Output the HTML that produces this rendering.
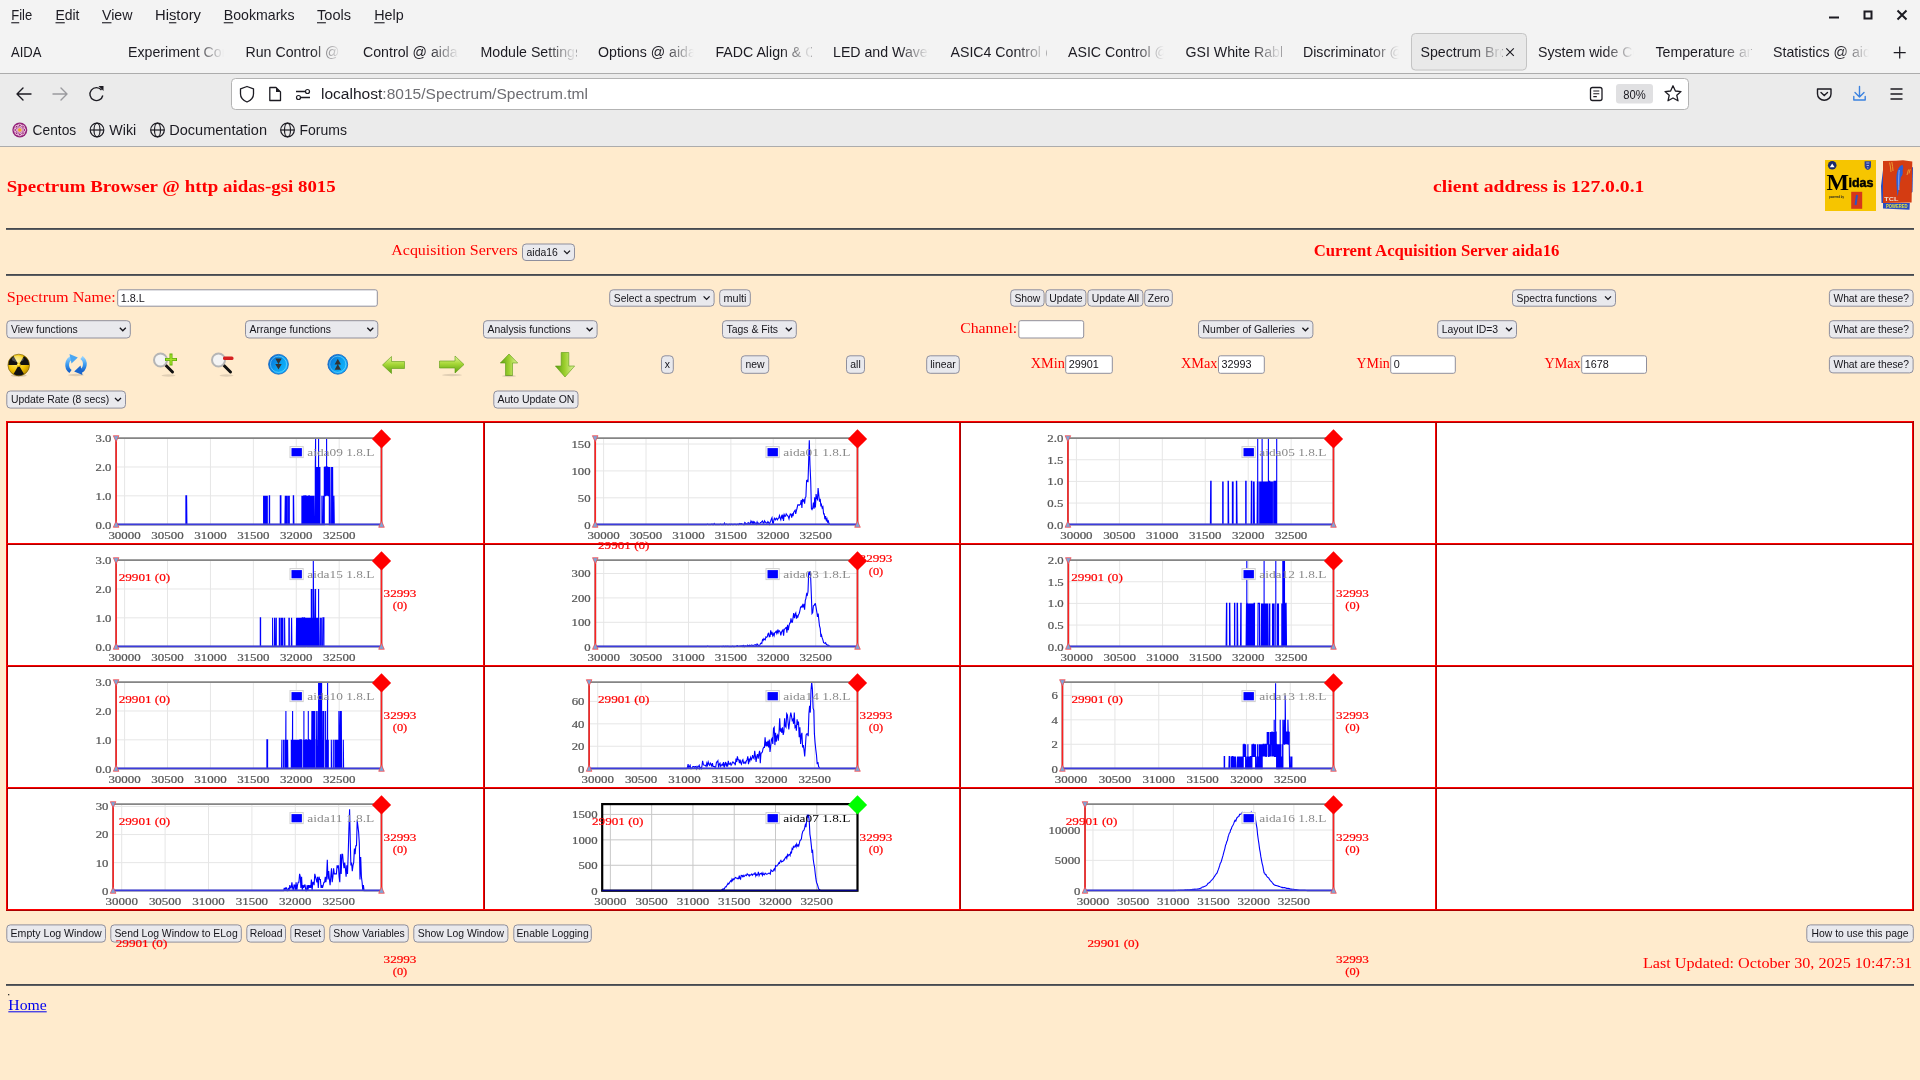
<!DOCTYPE html>
<html><head><meta charset="utf-8"><title>Spectrum Browser</title>
<style>html,body{margin:0;padding:0;width:1920px;height:1080px;overflow:hidden;background:#ffebcd;}svg{display:block;font-family:"Liberation Sans", sans-serif;will-change:transform;}</style></head><body>
<svg width="1920" height="1080" viewBox="0 0 1920 1080">
<rect x="0" y="0" width="1920" height="74" fill="#f3f3f3"/>
<rect x="0" y="73" width="1920" height="1" fill="#acacac"/>
<rect x="0" y="74" width="1920" height="72" fill="#ebebeb"/>
<rect x="0" y="146" width="1920" height="1" fill="#acacac"/>
<text x="11.25" y="20.30" font-size="14.6" fill="#1c1b22" textLength="21.00" lengthAdjust="spacingAndGlyphs" >File</text>
<rect x="11.25" y="22.2" width="7.96" height="1.1" fill="#1c1b22"/>
<text x="55.50" y="20.30" font-size="14.6" fill="#1c1b22" textLength="24.00" lengthAdjust="spacingAndGlyphs" >Edit</text>
<rect x="55.50" y="22.2" width="9.29" height="1.1" fill="#1c1b22"/>
<text x="102.00" y="20.30" font-size="14.6" fill="#1c1b22" textLength="30.50" lengthAdjust="spacingAndGlyphs" >View</text>
<rect x="102.00" y="22.2" width="9.47" height="1.1" fill="#1c1b22"/>
<text x="155.00" y="20.30" font-size="14.6" fill="#1c1b22" textLength="46.00" lengthAdjust="spacingAndGlyphs" >History</text>
<rect x="168.96" y="22.2" width="7.39" height="1.1" fill="#1c1b22"/>
<text x="223.75" y="20.30" font-size="14.6" fill="#1c1b22" textLength="70.75" lengthAdjust="spacingAndGlyphs" >Bookmarks</text>
<rect x="223.75" y="22.2" width="9.44" height="1.1" fill="#1c1b22"/>
<text x="317.00" y="20.30" font-size="14.6" fill="#1c1b22" textLength="34.00" lengthAdjust="spacingAndGlyphs" >Tools</text>
<rect x="317.00" y="22.2" width="8.90" height="1.1" fill="#1c1b22"/>
<text x="374.25" y="20.30" font-size="14.6" fill="#1c1b22" textLength="29.50" lengthAdjust="spacingAndGlyphs" >Help</text>
<rect x="374.25" y="22.2" width="10.36" height="1.1" fill="#1c1b22"/>
<rect x="1829" y="16.5" width="10" height="2" fill="#1c1b22"/>
<rect x="1864.5" y="11.5" width="7" height="7" fill="none" stroke="#1c1b22" stroke-width="2"/>
<path d="M1897.5 10.5 L1906.5 19.5 M1906.5 10.5 L1897.5 19.5" stroke="#1c1b22" stroke-width="2"/>
<text x="11.00" y="57.30" font-size="15" fill="#1c1b22" textLength="30.50" lengthAdjust="spacingAndGlyphs" >AIDA</text>
<defs><linearGradient id="fade" x1="0" x2="1" y1="0" y2="0"><stop offset="0" stop-color="#f3f3f3" stop-opacity="0"/><stop offset="1" stop-color="#f3f3f3" stop-opacity="1"/></linearGradient><linearGradient id="fadeSel" x1="0" x2="1" y1="0" y2="0"><stop offset="0" stop-color="#e9e9e9" stop-opacity="0"/><stop offset="1" stop-color="#e9e9e9" stop-opacity="1"/></linearGradient><clipPath id="tabclip"><rect x="0" y="0" width="96" height="74"/></clipPath><clipPath id="tabclipSel"><rect x="0" y="0" width="82" height="74"/></clipPath></defs>
<g transform="translate(128.00,0)" clip-path="url(#tabclip)">
<g transform="scale(0.945,1)">
<text x="0.00" y="57.30" font-size="15" fill="#1c1b22" >Experiment Control @ aida</text>
</g>
<rect x="66" y="40" width="30" height="26" fill="url(#fade)"/>
</g>
<g transform="translate(245.50,0)" clip-path="url(#tabclip)">
<g transform="scale(0.945,1)">
<text x="0.00" y="57.30" font-size="15" fill="#1c1b22" >Run Control @ aida</text>
</g>
<rect x="66" y="40" width="30" height="26" fill="url(#fade)"/>
</g>
<g transform="translate(363.00,0)" clip-path="url(#tabclip)">
<g transform="scale(0.945,1)">
<text x="0.00" y="57.30" font-size="15" fill="#1c1b22" >Control @ aida16</text>
</g>
<rect x="66" y="40" width="30" height="26" fill="url(#fade)"/>
</g>
<g transform="translate(480.50,0)" clip-path="url(#tabclip)">
<g transform="scale(0.945,1)">
<text x="0.00" y="57.30" font-size="15" fill="#1c1b22" >Module Settings @ aida</text>
</g>
<rect x="66" y="40" width="30" height="26" fill="url(#fade)"/>
</g>
<g transform="translate(598.00,0)" clip-path="url(#tabclip)">
<g transform="scale(0.945,1)">
<text x="0.00" y="57.30" font-size="15" fill="#1c1b22" >Options @ aida16</text>
</g>
<rect x="66" y="40" width="30" height="26" fill="url(#fade)"/>
</g>
<g transform="translate(715.50,0)" clip-path="url(#tabclip)">
<g transform="scale(0.945,1)">
<text x="0.00" y="57.30" font-size="15" fill="#1c1b22" >FADC Align &amp; Control</text>
</g>
<rect x="66" y="40" width="30" height="26" fill="url(#fade)"/>
</g>
<g transform="translate(833.00,0)" clip-path="url(#tabclip)">
<g transform="scale(0.945,1)">
<text x="0.00" y="57.30" font-size="15" fill="#1c1b22" >LED and Waveform</text>
</g>
<rect x="66" y="40" width="30" height="26" fill="url(#fade)"/>
</g>
<g transform="translate(950.50,0)" clip-path="url(#tabclip)">
<g transform="scale(0.945,1)">
<text x="0.00" y="57.30" font-size="15" fill="#1c1b22" >ASIC4 Control @ aida</text>
</g>
<rect x="66" y="40" width="30" height="26" fill="url(#fade)"/>
</g>
<g transform="translate(1068.00,0)" clip-path="url(#tabclip)">
<g transform="scale(0.945,1)">
<text x="0.00" y="57.30" font-size="15" fill="#1c1b22" >ASIC Control @ aida</text>
</g>
<rect x="66" y="40" width="30" height="26" fill="url(#fade)"/>
</g>
<g transform="translate(1185.50,0)" clip-path="url(#tabclip)">
<g transform="scale(0.945,1)">
<text x="0.00" y="57.30" font-size="15" fill="#1c1b22" >GSI White Rabbit</text>
</g>
<rect x="66" y="40" width="30" height="26" fill="url(#fade)"/>
</g>
<g transform="translate(1303.00,0)" clip-path="url(#tabclip)">
<g transform="scale(0.945,1)">
<text x="0.00" y="57.30" font-size="15" fill="#1c1b22" >Discriminator @ aida</text>
</g>
<rect x="66" y="40" width="30" height="26" fill="url(#fade)"/>
</g>
<rect x="1411" y="34" width="115" height="36.5" rx="4" fill="#000" opacity="0.06"/>
<rect x="1411.5" y="33.5" width="115" height="36.5" rx="4" fill="#e9e9e9" stroke="#c4c4c4" stroke-width="1"/>
<g transform="translate(1420.50,0)" clip-path="url(#tabclipSel)">
<g transform="scale(0.945,1)">
<text x="0.00" y="57.30" font-size="15" fill="#1c1b22" >Spectrum Browser</text>
</g>
<rect x="52" y="40" width="30" height="26" fill="url(#fadeSel)"/>
</g>
<path d="M1506.3 48.3 L1513.8 55.8 M1513.8 48.3 L1506.3 55.8" stroke="#1c1b22" stroke-width="1.15"/>
<g transform="translate(1538.00,0)" clip-path="url(#tabclip)">
<g transform="scale(0.945,1)">
<text x="0.00" y="57.30" font-size="15" fill="#1c1b22" >System wide Control</text>
</g>
<rect x="66" y="40" width="30" height="26" fill="url(#fade)"/>
</g>
<g transform="translate(1655.50,0)" clip-path="url(#tabclip)">
<g transform="scale(0.945,1)">
<text x="0.00" y="57.30" font-size="15" fill="#1c1b22" >Temperature and</text>
</g>
<rect x="66" y="40" width="30" height="26" fill="url(#fade)"/>
</g>
<g transform="translate(1773.00,0)" clip-path="url(#tabclip)">
<g transform="scale(0.945,1)">
<text x="0.00" y="57.30" font-size="15" fill="#1c1b22" >Statistics @ aida16</text>
</g>
<rect x="66" y="40" width="30" height="26" fill="url(#fade)"/>
</g>
<path d="M1899.7 46.5 V58.5 M1893.7 52.5 H1905.7" stroke="#1c1b22" stroke-width="1.25"/>
<path d="M17 94 H31 M17 94 L23 88 M17 94 L23 100" stroke="#1c1b22" stroke-width="1.4" fill="none" stroke-linecap="round"/>
<path d="M67 94 H53 M67 94 L61 88 M67 94 L61 100" stroke="#9a9a9e" stroke-width="1.4" fill="none" stroke-linecap="round"/>
<path d="M101.5 90 A6.5 6.5 0 1 0 102.8 95.5" stroke="#1c1b22" stroke-width="1.4" fill="none"/>
<path d="M98.5 86 L103.5 86 L103.5 91 Z" fill="#1c1b22"/>
<rect x="231.5" y="78.5" width="1457" height="31" rx="4" fill="#ffffff" stroke="#b3b3b3"/>
<path d="M247 86.5 L253.5 88.8 V94 C253.5 98 250.5 100.5 247 102 C243.5 100.5 240.5 98 240.5 94 V88.8 Z" fill="none" stroke="#1c1b22" stroke-width="1.3" stroke-linejoin="round"/>
<path d="M269.8 87.5 H276 L280.5 92 V100.5 H269.8 Z" fill="none" stroke="#1c1b22" stroke-width="1.3" stroke-linejoin="round"/>
<path d="M276 87.5 V92 H280.5 Z" fill="#1c1b22"/>
<path d="M296 91.5 H305 M301 97.5 H310" stroke="#1c1b22" stroke-width="1.3"/>
<circle cx="307.5" cy="91.5" r="2" fill="none" stroke="#1c1b22" stroke-width="1.2"/>
<circle cx="298.5" cy="97.5" r="2" fill="none" stroke="#1c1b22" stroke-width="1.2"/>
<text x="321.00" y="99.30" font-size="15.4" fill="#1c1b22" textLength="61.36" lengthAdjust="spacingAndGlyphs" >localhost</text>
<text x="382.36" y="99.30" font-size="15.4" fill="#6d6d72" textLength="205.64" lengthAdjust="spacingAndGlyphs" >:8015/Spectrum/Spectrum.tml</text>
<rect x="1590.5" y="87.5" width="11.5" height="13" rx="2" fill="none" stroke="#1c1b22" stroke-width="1.3"/>
<path d="M1593.3 91 H1599.3 M1593.3 93.8 H1599.3 M1593.3 96.6 H1596.8" stroke="#1c1b22" stroke-width="1.1"/>
<rect x="1616" y="84" width="37" height="19.5" rx="3" fill="#e0e0e2"/>
<text x="1634.50" y="98.70" font-size="12.5" fill="#1c1b22" text-anchor="middle" textLength="22.50" lengthAdjust="spacingAndGlyphs" >80%</text>
<path d="M1673 85.8 L1675.4 91 L1681 91.6 L1676.8 95.3 L1678 100.8 L1673 98 L1668 100.8 L1669.2 95.3 L1665 91.6 L1670.6 91 Z" fill="none" stroke="#1c1b22" stroke-width="1.3" stroke-linejoin="round"/>
<path d="M1817.5 89 H1831 V94 A6.75 6.2 0 0 1 1817.5 94 Z" fill="none" stroke="#1c1b22" stroke-width="1.4" stroke-linejoin="round"/>
<path d="M1821 92.5 L1824.25 95.5 L1827.5 92.5" fill="none" stroke="#1c1b22" stroke-width="1.4" stroke-linecap="round"/>
<path d="M1859.5 86.5 V97 M1855 92.5 L1859.5 97 L1864 92.5 M1853.8 96.5 V100 H1865.2 V96.5" fill="none" stroke="#3b82e0" stroke-width="1.4" stroke-linecap="round" stroke-linejoin="round"/>
<path d="M1890.5 89 H1902.5 M1890.5 94 H1902.5 M1890.5 99 H1902.5" stroke="#1c1b22" stroke-width="1.4"/>
<circle cx="19.8" cy="130" r="7.5" fill="#932279"/>
<circle cx="23.40" cy="130.00" r="2.2" fill="none" stroke="#f0c8e0" stroke-width="0.9"/>
<circle cx="22.35" cy="132.55" r="2.2" fill="none" stroke="#f0c8e0" stroke-width="0.9"/>
<circle cx="19.80" cy="133.60" r="2.2" fill="none" stroke="#f0c8e0" stroke-width="0.9"/>
<circle cx="17.25" cy="132.55" r="2.2" fill="none" stroke="#f0c8e0" stroke-width="0.9"/>
<circle cx="16.20" cy="130.00" r="2.2" fill="none" stroke="#f0c8e0" stroke-width="0.9"/>
<circle cx="17.25" cy="127.45" r="2.2" fill="none" stroke="#f0c8e0" stroke-width="0.9"/>
<circle cx="19.80" cy="126.40" r="2.2" fill="none" stroke="#f0c8e0" stroke-width="0.9"/>
<circle cx="22.35" cy="127.45" r="2.2" fill="none" stroke="#f0c8e0" stroke-width="0.9"/>
<circle cx="19.8" cy="130" r="1.8" fill="#efa724"/>
<text x="32.50" y="135.20" font-size="14.8" fill="#1c1b22" textLength="43.75" lengthAdjust="spacingAndGlyphs" >Centos</text>
<g fill="none" stroke="#1c1b22" stroke-width="1.2"><circle cx="97" cy="130" r="6.8"/><ellipse cx="97" cy="130" rx="3" ry="6.8"/><path d="M90.2 130 H103.8"/></g>
<g fill="none" stroke="#1c1b22" stroke-width="1.2"><circle cx="157.5" cy="130" r="6.8"/><ellipse cx="157.5" cy="130" rx="3" ry="6.8"/><path d="M150.7 130 H164.3"/></g>
<g fill="none" stroke="#1c1b22" stroke-width="1.2"><circle cx="287.5" cy="130" r="6.8"/><ellipse cx="287.5" cy="130" rx="3" ry="6.8"/><path d="M280.7 130 H294.3"/></g>
<text x="109.25" y="135.20" font-size="14.8" fill="#1c1b22" textLength="27.00" lengthAdjust="spacingAndGlyphs" >Wiki</text>
<text x="169.25" y="135.20" font-size="14.8" fill="#1c1b22" textLength="97.75" lengthAdjust="spacingAndGlyphs" >Documentation</text>
<text x="299.50" y="135.20" font-size="14.8" fill="#1c1b22" textLength="47.50" lengthAdjust="spacingAndGlyphs" >Forums</text>
<rect x="0" y="147" width="1920" height="933" fill="#ffebcd"/>
<text x="6.75" y="192.30" font-size="17.6" fill="#ff0000" font-family='"Liberation Serif", serif' font-weight="bold" textLength="329.00" lengthAdjust="spacingAndGlyphs" >Spectrum Browser @ http aidas-gsi 8015</text>
<text x="1433.10" y="192.30" font-size="17.6" fill="#ff0000" font-family='"Liberation Serif", serif' font-weight="bold" textLength="211.30" lengthAdjust="spacingAndGlyphs" >client address is 127.0.0.1</text>
<rect x="1825" y="160" width="51" height="51" fill="#f6c500"/>
<circle cx="1832.2" cy="165.3" r="4.3" fill="#1b2a6b"/><path d="M1829.8 167.2 L1832.2 163.5 L1834.6 167.2 Z" fill="#fff"/>
<path d="M1864.6 161.3 H1871 V166 C1871 168 1869.5 169.5 1867.8 170 C1866.1 169.5 1864.6 168 1864.6 166 Z" fill="#2a3f9a"/><path d="M1866.2 163 H1869.4 M1866.6 165.5 H1869 M1867.8 167.2 V168.6" stroke="#dfe4ff" stroke-width="0.7"/>
<text x="1826.5" y="189.5" font-size="24" font-weight="bold" fill="#000" font-family='"Liberation Serif", serif' textLength="22.5" lengthAdjust="spacingAndGlyphs">M</text>
<text x="1848.5" y="187" font-size="13.5" font-weight="bold" fill="#000" stroke="#000" stroke-width="0.5" textLength="25" lengthAdjust="spacingAndGlyphs">idas</text>
<text x="1829" y="197.5" font-size="3.6" font-weight="bold" fill="#222" textLength="15" lengthAdjust="spacingAndGlyphs">powered by</text>
<rect x="1851.2" y="191.8" width="11" height="17" fill="#d5371a"/><path d="M1857 195 L1855.5 205" stroke="#2b55c0" stroke-width="2"/>
<path d="M1881 186 L1883 170 L1883 208.5 L1909.5 209.8 L1909.8 203 L1881.5 203 Z" fill="#2a4cc0"/>
<path d="M1911 168 L1913 167 L1912.5 192 L1911 193 Z" fill="#2a4cc0"/>
<path d="M1883 161 L1896 160.8 L1903 160.3 L1912.3 161.6 L1911.6 202.6 L1883 202.9 Z" fill="#d43c12"/>
<path d="M1902.3 164.8 C1898.5 166 1896.2 172 1896.3 180 C1896.4 186 1897 191 1897.6 196.5 C1898.6 190 1900.3 183 1900.8 177 C1902.5 176 1903.2 173 1902.6 170.5 C1903.6 168.5 1903.5 166.3 1902.3 164.8 Z" fill="#2d5fd8"/>
<path d="M1899.2 170 C1898.6 176 1898.6 184 1898.9 190" stroke="#b8d0ff" stroke-width="0.7" fill="none"/>
<path d="M1889.6 162.5 C1890.3 165.5 1890.8 168.5 1891 172 M1891.8 162 C1892.4 165 1892.9 168 1893 171 M1908.5 169.5 L1907 175 M1910.2 169.2 L1909 173.5" stroke="#f2b33a" stroke-width="0.8" fill="none"/>
<text x="1884.3" y="201.2" font-size="6" font-weight="bold" fill="#f1dccf" textLength="14" lengthAdjust="spacingAndGlyphs">TCL</text>
<text x="1886" y="208.4" font-size="5.2" font-weight="bold" fill="#e6e23a" textLength="21.5" lengthAdjust="spacingAndGlyphs">POWERED</text>
<rect x="6" y="228" width="1908" height="1" fill="#46494e"/>
<rect x="6" y="229" width="1908" height="1" fill="#5c5f63"/>
<text x="391.25" y="255.20" font-size="15.4" fill="#ff0000" font-family='"Liberation Serif", serif' textLength="126.50" lengthAdjust="spacingAndGlyphs" >Acquisition Servers</text>
<rect x="522.50" y="244.00" width="52.00" height="16.50" rx="3.5" fill="#e9e9ed" stroke="#8f8f9d"/>
<text x="526.60" y="256.15" font-size="11" fill="#15141a" textLength="31.21" lengthAdjust="spacingAndGlyphs" >aida16</text>
<path d="M564.00 250.65 L567.00 253.65 L570.00 250.65" fill="none" stroke="#15141a" stroke-width="1.3"/>
<text x="1313.70" y="256.00" font-size="16.2" fill="#ff0000" font-family='"Liberation Serif", serif' font-weight="bold" textLength="245.70" lengthAdjust="spacingAndGlyphs" >Current Acquisition Server aida16</text>
<rect x="6" y="274" width="1908" height="1" fill="#46494e"/>
<rect x="6" y="275" width="1908" height="1" fill="#5c5f63"/>
<text x="6.75" y="302.00" font-size="15.4" fill="#ff0000" font-family='"Liberation Serif", serif' textLength="109.00" lengthAdjust="spacingAndGlyphs" >Spectrum Name:</text>
<rect x="117.70" y="289.80" width="259.60" height="16.40" rx="2" fill="#ffffff" stroke="#8f8f9d"/>
<text x="120.70" y="301.90" font-size="10.8" fill="#15141a" >1.8.L</text>
<rect x="609.70" y="289.80" width="104.40" height="16.40" rx="3.5" fill="#e9e9ed" stroke="#8f8f9d"/>
<text x="613.80" y="301.90" font-size="11" fill="#15141a" textLength="82.50" lengthAdjust="spacingAndGlyphs" >Select a spectrum</text>
<path d="M703.60 296.40 L706.60 299.40 L709.60 296.40" fill="none" stroke="#15141a" stroke-width="1.3"/>
<rect x="719.70" y="289.80" width="30.60" height="16.40" rx="3.5" fill="#e9e9ed" stroke="#8f8f9d"/>
<text x="735.00" y="301.90" font-size="11" fill="#15141a" text-anchor="middle" textLength="23.00" lengthAdjust="spacingAndGlyphs" >multi</text>
<rect x="1010.70" y="289.80" width="33.40" height="16.40" rx="3.5" fill="#e9e9ed" stroke="#8f8f9d"/>
<text x="1027.40" y="301.90" font-size="11" fill="#15141a" text-anchor="middle" textLength="26.00" lengthAdjust="spacingAndGlyphs" >Show</text>
<rect x="1045.90" y="289.80" width="40.00" height="16.40" rx="3.5" fill="#e9e9ed" stroke="#8f8f9d"/>
<text x="1065.90" y="301.90" font-size="11" fill="#15141a" text-anchor="middle" textLength="33.52" lengthAdjust="spacingAndGlyphs" >Update</text>
<rect x="1087.90" y="289.80" width="55.00" height="16.40" rx="3.5" fill="#e9e9ed" stroke="#8f8f9d"/>
<text x="1115.40" y="301.90" font-size="11" fill="#15141a" text-anchor="middle" textLength="47.38" lengthAdjust="spacingAndGlyphs" >Update All</text>
<rect x="1144.70" y="289.80" width="27.60" height="16.40" rx="3.5" fill="#e9e9ed" stroke="#8f8f9d"/>
<text x="1158.50" y="301.90" font-size="11" fill="#15141a" text-anchor="middle" textLength="21.37" lengthAdjust="spacingAndGlyphs" >Zero</text>
<rect x="1512.50" y="289.80" width="103.00" height="16.40" rx="3.5" fill="#e9e9ed" stroke="#8f8f9d"/>
<text x="1516.60" y="301.90" font-size="11" fill="#15141a" textLength="80.31" lengthAdjust="spacingAndGlyphs" >Spectra functions</text>
<path d="M1605.00 296.40 L1608.00 299.40 L1611.00 296.40" fill="none" stroke="#15141a" stroke-width="1.3"/>
<rect x="1829.40" y="289.80" width="83.70" height="16.40" rx="3.5" fill="#e9e9ed" stroke="#8f8f9d"/>
<text x="1871.25" y="301.90" font-size="11" fill="#15141a" text-anchor="middle" textLength="75.70" lengthAdjust="spacingAndGlyphs" >What are these?</text>
<rect x="6.80" y="320.70" width="123.50" height="17.30" rx="3.5" fill="#e9e9ed" stroke="#8f8f9d"/>
<text x="10.90" y="333.25" font-size="11" fill="#15141a" textLength="66.83" lengthAdjust="spacingAndGlyphs" >View functions</text>
<path d="M119.80 327.75 L122.80 330.75 L125.80 327.75" fill="none" stroke="#15141a" stroke-width="1.3"/>
<rect x="245.50" y="320.70" width="132.30" height="17.30" rx="3.5" fill="#e9e9ed" stroke="#8f8f9d"/>
<text x="249.60" y="333.25" font-size="11" fill="#15141a" textLength="81.47" lengthAdjust="spacingAndGlyphs" >Arrange functions</text>
<path d="M367.30 327.75 L370.30 330.75 L373.30 327.75" fill="none" stroke="#15141a" stroke-width="1.3"/>
<rect x="483.50" y="320.70" width="113.60" height="17.30" rx="3.5" fill="#e9e9ed" stroke="#8f8f9d"/>
<text x="487.60" y="333.25" font-size="11" fill="#15141a" textLength="83.20" lengthAdjust="spacingAndGlyphs" >Analysis functions</text>
<path d="M586.60 327.75 L589.60 330.75 L592.60 327.75" fill="none" stroke="#15141a" stroke-width="1.3"/>
<rect x="722.50" y="320.70" width="73.80" height="17.30" rx="3.5" fill="#e9e9ed" stroke="#8f8f9d"/>
<text x="726.60" y="333.25" font-size="11" fill="#15141a" textLength="51.41" lengthAdjust="spacingAndGlyphs" >Tags &amp; Fits</text>
<path d="M785.80 327.75 L788.80 330.75 L791.80 327.75" fill="none" stroke="#15141a" stroke-width="1.3"/>
<text x="960.20" y="333.20" font-size="15.4" fill="#ff0000" font-family='"Liberation Serif", serif' textLength="57.00" lengthAdjust="spacingAndGlyphs" >Channel:</text>
<rect x="1018.80" y="320.70" width="64.90" height="17.30" rx="2" fill="#ffffff" stroke="#8f8f9d"/>
<rect x="1198.50" y="320.70" width="114.40" height="17.30" rx="3.5" fill="#e9e9ed" stroke="#8f8f9d"/>
<text x="1202.60" y="333.25" font-size="11" fill="#15141a" textLength="92.43" lengthAdjust="spacingAndGlyphs" >Number of Galleries</text>
<path d="M1302.40 327.75 L1305.40 330.75 L1308.40 327.75" fill="none" stroke="#15141a" stroke-width="1.3"/>
<rect x="1437.70" y="320.70" width="78.80" height="17.30" rx="3.5" fill="#e9e9ed" stroke="#8f8f9d"/>
<text x="1441.80" y="333.25" font-size="11" fill="#15141a" textLength="56.34" lengthAdjust="spacingAndGlyphs" >Layout ID=3</text>
<path d="M1506.00 327.75 L1509.00 330.75 L1512.00 327.75" fill="none" stroke="#15141a" stroke-width="1.3"/>
<rect x="1829.40" y="320.70" width="83.70" height="17.30" rx="3.5" fill="#e9e9ed" stroke="#8f8f9d"/>
<text x="1871.25" y="333.25" font-size="11" fill="#15141a" text-anchor="middle" textLength="75.70" lengthAdjust="spacingAndGlyphs" >What are these?</text>
<defs><radialGradient id="radg" cx="0.4" cy="0.35" r="0.7"><stop offset="0" stop-color="#fff38a"/><stop offset="0.6" stop-color="#f2c200"/><stop offset="1" stop-color="#b88a00"/></radialGradient><linearGradient id="blug" x1="0" x2="1" y1="0.2" y2="0.8"><stop offset="0" stop-color="#0b6fd4"/><stop offset="0.55" stop-color="#08a0f0"/><stop offset="1" stop-color="#12b8ff"/></linearGradient><linearGradient id="grng" x1="0" x2="0" y1="0" y2="1"><stop offset="0" stop-color="#e4f5a0"/><stop offset="0.45" stop-color="#a8d838"/><stop offset="1" stop-color="#5aa010"/></linearGradient><linearGradient id="grnh" x1="0" x2="1" y1="0" y2="0"><stop offset="0" stop-color="#5aa010"/><stop offset="0.5" stop-color="#9ed030"/><stop offset="1" stop-color="#e0f4a0"/></linearGradient></defs>
<ellipse cx="18.75" cy="375.5" rx="8" ry="1.5" fill="#000" opacity="0.15"/>
<circle cx="18.75" cy="365" r="10.8" fill="url(#radg)" stroke="#6b5300" stroke-width="0.6"/>
<path d="M18.75 365 L8.35 365.00 A10.4 10.4 0 0 1 13.55 355.99 Z" fill="#111"/>
<path d="M18.75 365 L23.95 355.99 A10.4 10.4 0 0 1 29.15 365.00 Z" fill="#111"/>
<path d="M18.75 365 L23.95 374.01 A10.4 10.4 0 0 1 13.55 374.01 Z" fill="#111"/>
<circle cx="18.75" cy="365" r="2" fill="url(#radg)"/>
<ellipse cx="17.75" cy="359" rx="6" ry="3" fill="#fff" opacity="0.25"/>
<defs><linearGradient id="refg" x1="0" x2="0" y1="0" y2="1"><stop offset="0" stop-color="#8fd0ff"/><stop offset="0.5" stop-color="#3a9af0"/><stop offset="1" stop-color="#1560c8"/></linearGradient></defs>
<path d="M70.5 371.5 A8.2 8.2 0 0 1 72.5 357.2" fill="none" stroke="url(#refg)" stroke-width="3.8"/>
<path d="M69.5 354 L77.8 357.5 L71.5 363.5 Z" fill="#4aa6f2"/>
<path d="M81.5 357.5 A8.2 8.2 0 0 1 79.5 371.8" fill="none" stroke="url(#refg)" stroke-width="3.8"/>
<path d="M82.5 375 L74.2 371.5 L80.5 365.5 Z" fill="#1a66cc"/>
<ellipse cx="76" cy="375" rx="8" ry="1.2" fill="#000" opacity="0.12"/>
<path d="M166.0 365.5 L172.5 372" stroke="#111" stroke-width="3" stroke-linecap="round"/>
<circle cx="160.5" cy="360" r="6.5" fill="#f4f4f4" stroke="#b5b5b5" stroke-width="2"/>
<ellipse cx="168.5" cy="375.5" rx="7" ry="1.2" fill="#000" opacity="0.12"/>
<path d="M171 353.5 V365.5 M165 359.5 H177" stroke="#5fae0a" stroke-width="3"/>
<path d="M171 354.5 V364.5 M166 359.5 H176" stroke="#a6e22a" stroke-width="1.4"/>
<path d="M224.0 365.5 L230.5 372" stroke="#111" stroke-width="3" stroke-linecap="round"/>
<circle cx="218.5" cy="360" r="6.5" fill="#f4f4f4" stroke="#b5b5b5" stroke-width="2"/>
<ellipse cx="226.5" cy="375.5" rx="7" ry="1.2" fill="#000" opacity="0.12"/>
<rect x="223" y="356.5" width="10.5" height="3.5" rx="1.5" fill="#d62020"/>
<circle cx="278.5" cy="364.3" r="9.9" fill="url(#blug)" stroke="#0a5cc0" stroke-width="0.8"/>
<circle cx="278.5" cy="364.3" r="8.1" fill="none" stroke="#a8e4ff" stroke-width="0.7" opacity="0.7"/>
<path d="M275.3 358.6 L278.5 364.3 L281.7 358.6 Z M275.3 363.9 L278.5 369.6 L281.7 363.9 Z" fill="#333"/>
<circle cx="337.8" cy="364.3" r="9.9" fill="url(#blug)" stroke="#0a5cc0" stroke-width="0.8"/>
<circle cx="337.8" cy="364.3" r="8.1" fill="none" stroke="#a8e4ff" stroke-width="0.7" opacity="0.7"/>
<path d="M334.6 364.5 L337.8 358.8 L341.0 364.5 Z M334.6 369.8 L337.8 364 L341.0 369.8 Z" fill="#333"/>
<path d="M382.5 365 L391.5 356.5 V361.5 H404.5 V368.5 H391.5 V373.5 Z" fill="url(#grng)" stroke="#5a9a10" stroke-width="0.6"/>
<path d="M464 364.5 L455 356 V361 H439.5 V368 H455 V373 Z" fill="url(#grng)" stroke="#5a9a10" stroke-width="0.6"/>
<ellipse cx="452" cy="375" rx="10" ry="1.2" fill="#000" opacity="0.12"/>
<path d="M509 354 L517.7 363 H512.5 V375.5 H505.5 V363 H500.3 Z" fill="url(#grnh)" stroke="#5a9a10" stroke-width="0.6"/>
<ellipse cx="509" cy="376" rx="7" ry="1.2" fill="#000" opacity="0.12"/>
<path d="M565 377 L574.6 366 H568.8 V352.5 H561.2 V366 H555.4 Z" fill="url(#grnh)" stroke="#5a9a10" stroke-width="0.6"/>
<rect x="661.50" y="355.80" width="11.80" height="17.50" rx="3.5" fill="#e9e9ed" stroke="#8f8f9d"/>
<text x="667.40" y="368.45" font-size="11" fill="#15141a" text-anchor="middle" textLength="5.20" lengthAdjust="spacingAndGlyphs" >x</text>
<rect x="741.30" y="355.80" width="27.40" height="17.50" rx="3.5" fill="#e9e9ed" stroke="#8f8f9d"/>
<text x="755.00" y="368.45" font-size="11" fill="#15141a" text-anchor="middle" textLength="19.07" lengthAdjust="spacingAndGlyphs" >new</text>
<rect x="846.50" y="355.80" width="18.00" height="17.50" rx="3.5" fill="#e9e9ed" stroke="#8f8f9d"/>
<text x="855.50" y="368.45" font-size="11" fill="#15141a" text-anchor="middle" textLength="10.40" lengthAdjust="spacingAndGlyphs" >all</text>
<rect x="926.70" y="355.80" width="32.60" height="17.50" rx="3.5" fill="#e9e9ed" stroke="#8f8f9d"/>
<text x="943.00" y="368.45" font-size="11" fill="#15141a" text-anchor="middle" textLength="25.42" lengthAdjust="spacingAndGlyphs" >linear</text>
<text x="1030.70" y="368.00" font-size="14.6" fill="#ff0000" font-family='"Liberation Serif", serif' textLength="34.10" lengthAdjust="spacingAndGlyphs" >XMin</text>
<rect x="1065.70" y="355.80" width="46.60" height="17.50" rx="2" fill="#ffffff" stroke="#8f8f9d"/>
<text x="1068.70" y="368.45" font-size="10.8" fill="#15141a" >29901</text>
<text x="1181.00" y="368.00" font-size="14.6" fill="#ff0000" font-family='"Liberation Serif", serif' textLength="36.50" lengthAdjust="spacingAndGlyphs" >XMax</text>
<rect x="1218.50" y="355.80" width="45.80" height="17.50" rx="2" fill="#ffffff" stroke="#8f8f9d"/>
<text x="1221.50" y="368.45" font-size="10.8" fill="#15141a" >32993</text>
<text x="1356.50" y="368.00" font-size="14.6" fill="#ff0000" font-family='"Liberation Serif", serif' textLength="33.30" lengthAdjust="spacingAndGlyphs" >YMin</text>
<rect x="1390.70" y="355.80" width="64.60" height="17.50" rx="2" fill="#ffffff" stroke="#8f8f9d"/>
<text x="1393.70" y="368.45" font-size="10.8" fill="#15141a" >0</text>
<text x="1544.50" y="368.00" font-size="14.6" fill="#ff0000" font-family='"Liberation Serif", serif' textLength="36.20" lengthAdjust="spacingAndGlyphs" >YMax</text>
<rect x="1581.70" y="355.80" width="64.80" height="17.50" rx="2" fill="#ffffff" stroke="#8f8f9d"/>
<text x="1584.70" y="368.45" font-size="10.8" fill="#15141a" >1678</text>
<rect x="1829.40" y="356.00" width="83.70" height="16.90" rx="3.5" fill="#e9e9ed" stroke="#8f8f9d"/>
<text x="1871.25" y="368.35" font-size="11" fill="#15141a" text-anchor="middle" textLength="75.70" lengthAdjust="spacingAndGlyphs" >What are these?</text>
<rect x="6.80" y="391.00" width="118.70" height="17.10" rx="3.5" fill="#e9e9ed" stroke="#8f8f9d"/>
<text x="10.90" y="403.45" font-size="11" fill="#15141a" textLength="98.21" lengthAdjust="spacingAndGlyphs" >Update Rate (8 secs)</text>
<path d="M115.00 397.95 L118.00 400.95 L121.00 397.95" fill="none" stroke="#15141a" stroke-width="1.3"/>
<rect x="493.80" y="391.00" width="84.20" height="17.10" rx="3.5" fill="#e9e9ed" stroke="#8f8f9d"/>
<text x="535.90" y="403.45" font-size="11" fill="#15141a" text-anchor="middle" textLength="77.00" lengthAdjust="spacingAndGlyphs" >Auto Update ON</text>
<rect x="6" y="421" width="1908" height="490" fill="#ffffff"/>
<rect x="6" y="421" width="1908" height="1" fill="#ff0000"/>
<rect x="6" y="421" width="1" height="490" fill="#ff0000"/>
<rect x="6" y="910" width="1908" height="1" fill="#aa0000"/>
<rect x="1913" y="421" width="1" height="490" fill="#aa0000"/>
<rect x="7" y="422" width="477" height="1" fill="#aa0000"/>
<rect x="7" y="422" width="1" height="122" fill="#aa0000"/>
<rect x="7" y="543" width="477" height="1" fill="#ff0000"/>
<rect x="483" y="423" width="1" height="121" fill="#ff0000"/>
<rect x="484" y="422" width="476" height="1" fill="#aa0000"/>
<rect x="484" y="422" width="1" height="122" fill="#aa0000"/>
<rect x="484" y="543" width="476" height="1" fill="#ff0000"/>
<rect x="959" y="423" width="1" height="121" fill="#ff0000"/>
<rect x="960" y="422" width="476" height="1" fill="#aa0000"/>
<rect x="960" y="422" width="1" height="122" fill="#aa0000"/>
<rect x="960" y="543" width="476" height="1" fill="#ff0000"/>
<rect x="1435" y="423" width="1" height="121" fill="#ff0000"/>
<rect x="1436" y="422" width="477" height="1" fill="#aa0000"/>
<rect x="1436" y="422" width="1" height="122" fill="#aa0000"/>
<rect x="1436" y="543" width="477" height="1" fill="#ff0000"/>
<rect x="1912" y="423" width="1" height="121" fill="#ff0000"/>
<rect x="7" y="544" width="477" height="1" fill="#aa0000"/>
<rect x="7" y="544" width="1" height="122" fill="#aa0000"/>
<rect x="7" y="665" width="477" height="1" fill="#ff0000"/>
<rect x="483" y="545" width="1" height="121" fill="#ff0000"/>
<rect x="484" y="544" width="476" height="1" fill="#aa0000"/>
<rect x="484" y="544" width="1" height="122" fill="#aa0000"/>
<rect x="484" y="665" width="476" height="1" fill="#ff0000"/>
<rect x="959" y="545" width="1" height="121" fill="#ff0000"/>
<rect x="960" y="544" width="476" height="1" fill="#aa0000"/>
<rect x="960" y="544" width="1" height="122" fill="#aa0000"/>
<rect x="960" y="665" width="476" height="1" fill="#ff0000"/>
<rect x="1435" y="545" width="1" height="121" fill="#ff0000"/>
<rect x="1436" y="544" width="477" height="1" fill="#aa0000"/>
<rect x="1436" y="544" width="1" height="122" fill="#aa0000"/>
<rect x="1436" y="665" width="477" height="1" fill="#ff0000"/>
<rect x="1912" y="545" width="1" height="121" fill="#ff0000"/>
<rect x="7" y="666" width="477" height="1" fill="#aa0000"/>
<rect x="7" y="666" width="1" height="122" fill="#aa0000"/>
<rect x="7" y="787" width="477" height="1" fill="#ff0000"/>
<rect x="483" y="667" width="1" height="121" fill="#ff0000"/>
<rect x="484" y="666" width="476" height="1" fill="#aa0000"/>
<rect x="484" y="666" width="1" height="122" fill="#aa0000"/>
<rect x="484" y="787" width="476" height="1" fill="#ff0000"/>
<rect x="959" y="667" width="1" height="121" fill="#ff0000"/>
<rect x="960" y="666" width="476" height="1" fill="#aa0000"/>
<rect x="960" y="666" width="1" height="122" fill="#aa0000"/>
<rect x="960" y="787" width="476" height="1" fill="#ff0000"/>
<rect x="1435" y="667" width="1" height="121" fill="#ff0000"/>
<rect x="1436" y="666" width="477" height="1" fill="#aa0000"/>
<rect x="1436" y="666" width="1" height="122" fill="#aa0000"/>
<rect x="1436" y="787" width="477" height="1" fill="#ff0000"/>
<rect x="1912" y="667" width="1" height="121" fill="#ff0000"/>
<rect x="7" y="788" width="477" height="1" fill="#aa0000"/>
<rect x="7" y="788" width="1" height="122" fill="#aa0000"/>
<rect x="7" y="909" width="477" height="1" fill="#ff0000"/>
<rect x="483" y="789" width="1" height="121" fill="#ff0000"/>
<rect x="484" y="788" width="476" height="1" fill="#aa0000"/>
<rect x="484" y="788" width="1" height="122" fill="#aa0000"/>
<rect x="484" y="909" width="476" height="1" fill="#ff0000"/>
<rect x="959" y="789" width="1" height="121" fill="#ff0000"/>
<rect x="960" y="788" width="476" height="1" fill="#aa0000"/>
<rect x="960" y="788" width="1" height="122" fill="#aa0000"/>
<rect x="960" y="909" width="476" height="1" fill="#ff0000"/>
<rect x="1435" y="789" width="1" height="121" fill="#ff0000"/>
<rect x="1436" y="788" width="477" height="1" fill="#aa0000"/>
<rect x="1436" y="788" width="1" height="122" fill="#aa0000"/>
<rect x="1436" y="909" width="477" height="1" fill="#ff0000"/>
<rect x="1912" y="789" width="1" height="121" fill="#ff0000"/>
<rect x="124.10" y="438.10" width="1" height="86.60" fill="#e6e6e6"/>
<rect x="167.01" y="438.10" width="1" height="86.60" fill="#e6e6e6"/>
<rect x="209.93" y="438.10" width="1" height="86.60" fill="#e6e6e6"/>
<rect x="252.85" y="438.10" width="1" height="86.60" fill="#e6e6e6"/>
<rect x="295.77" y="438.10" width="1" height="86.60" fill="#e6e6e6"/>
<rect x="338.68" y="438.10" width="1" height="86.60" fill="#e6e6e6"/>
<rect x="116.10" y="495.33" width="265.40" height="1" fill="#e6e6e6"/>
<rect x="116.10" y="466.47" width="265.40" height="1" fill="#e6e6e6"/>
<rect x="116.10" y="437.60" width="265.40" height="1" fill="#e6e6e6"/>
<path d="M116.3 524.7 185.9 524.7 185.9 495.8 186.6 495.8 186.9 524.7 263.6 524.7 263.6 495.8 263.6 524.7 263.9 524.7 263.9 495.8 263.9 524.7 264.6 524.7 264.6 495.8 264.6 524.7 264.9 524.7 264.9 495.8 264.9 524.7 265.3 524.7 265.3 495.8 265.3 524.7 265.9 524.7 265.9 495.8 266.3 524.7 266.6 524.7 266.6 495.8 266.6 524.7 266.9 524.7 266.9 495.8 266.9 524.7 267.3 524.7 267.3 495.8 267.3 524.7 269.3 524.7 269.3 495.8 269.6 495.8 269.6 524.7 280.3 524.7 280.3 495.8 280.9 495.8 280.9 524.7 284.9 524.7 285.3 495.8 285.6 524.7 285.6 495.8 285.9 524.7 286.3 524.7 286.3 495.8 286.6 524.7 286.9 495.8 286.9 524.7 287.3 524.7 287.3 495.8 287.3 524.7 288.6 524.7 288.6 495.8 288.9 524.7 288.9 495.8 288.9 524.7 289.3 524.7 289.3 495.8 289.3 524.7 293.3 524.7 293.3 495.8 293.6 495.8 293.9 524.7 301.9 524.7 301.9 495.8 301.9 524.7 302.3 524.7 302.3 495.8 302.6 524.7 302.6 495.8 302.6 524.7 302.9 524.7 303.3 495.8 303.3 524.7 303.6 524.7 303.6 495.8 303.6 524.7 303.9 524.7 303.9 495.8 304.3 495.8 304.3 524.7 304.6 524.7 304.6 495.8 304.6 524.7 305.3 524.7 305.6 495.8 305.6 524.7 305.6 495.8 305.9 495.8 305.9 524.7 305.9 495.8 306.3 524.7 306.9 524.7 306.9 495.8 306.9 524.7 307.3 524.7 307.3 495.8 307.3 524.7 308.3 524.7 308.3 495.8 308.3 524.7 308.6 524.7 308.6 495.8 308.9 524.7 308.9 495.8 309.3 495.8 309.3 524.7 309.6 524.7 309.6 495.8 309.6 524.7 309.9 524.7 309.9 495.8 310.3 524.7 310.3 495.8 310.3 524.7 310.6 524.7 310.6 495.8 310.6 524.7 311.3 524.7 311.6 495.8 311.6 524.7 312.6 524.7 312.6 495.8 312.9 524.7 313.6 524.7 313.6 495.8 313.6 524.7 313.9 524.7 313.9 495.8 314.3 524.7 315.3 524.7 315.3 467.0 315.6 438.1 315.6 524.7 315.9 524.7 315.9 495.8 315.9 524.7 316.3 524.7 316.3 495.8 316.3 524.7 316.6 524.7 316.6 467.0 316.6 524.7 316.9 524.7 316.9 495.8 316.9 524.7 317.6 524.7 317.6 467.0 317.9 524.7 318.3 524.7 318.6 438.1 318.6 524.7 318.6 467.0 318.9 495.8 318.9 524.7 319.3 524.7 319.3 467.0 319.3 524.7 319.6 524.7 319.9 467.0 319.9 524.7 321.9 524.7 321.9 495.8 322.3 524.7 323.3 524.7 323.3 495.8 323.3 524.7 323.6 524.7 323.6 495.8 323.6 524.7 324.3 524.7 324.3 467.0 324.3 495.8 324.6 495.8 324.6 467.0 324.6 495.8 324.9 495.8 324.9 467.0 325.3 467.0 325.3 495.8 325.6 495.8 325.6 467.0 325.9 495.8 325.9 467.0 326.3 467.0 326.3 495.8 326.6 467.0 326.6 438.1 326.6 495.8 326.6 467.0 326.9 495.8 326.9 467.0 327.3 495.8 327.3 467.0 327.6 467.0 327.6 495.8 327.9 467.0 327.9 495.8 327.9 467.0 328.3 495.8 328.6 495.8 328.6 467.0 328.9 495.8 328.9 467.0 328.9 495.8 329.3 495.8 329.3 467.0 329.3 524.7 329.9 524.7 329.9 467.0 330.3 524.7 331.6 524.7 331.6 467.0 331.6 524.7 332.3 524.7 332.3 467.0 332.6 524.7 332.6 467.0 332.9 524.7 333.9 524.7 333.9 495.8 334.3 524.7 381.6 524.7" fill="none" stroke="#0000ff" stroke-width="1.1" stroke-linejoin="miter"/>
<rect x="290.00" y="446.60" width="13.2" height="11" fill="#fff" stroke="#cfcfcf" stroke-width="1"/>
<rect x="291.50" y="448.10" width="10.4" height="8.2" fill="#0000ff"/>
<text x="307.30" y="455.70" font-size="11" fill="#8a8a8a" font-family='"Liberation Serif", serif' textLength="67.00" lengthAdjust="spacingAndGlyphs" >aida09 1.8.L</text>
<path d="M116.10 438.10 H381.50 V524.70 H116.10 Z" fill="none" stroke="#858585" stroke-width="1.8"/>
<path d="M116.10 524.30 H380.50" stroke="#3c3cdc" stroke-width="1.6"/>
<text x="111.50" y="528.60" font-size="11" fill="#555" font-family='"Liberation Serif", serif' text-anchor="end" textLength="15.95" lengthAdjust="spacingAndGlyphs" stroke="#555" stroke-width="0.22">0.0</text>
<text x="111.50" y="499.73" font-size="11" fill="#555" font-family='"Liberation Serif", serif' text-anchor="end" textLength="15.95" lengthAdjust="spacingAndGlyphs" stroke="#555" stroke-width="0.22">1.0</text>
<text x="111.50" y="470.87" font-size="11" fill="#555" font-family='"Liberation Serif", serif' text-anchor="end" textLength="15.95" lengthAdjust="spacingAndGlyphs" stroke="#555" stroke-width="0.22">2.0</text>
<text x="111.50" y="442.00" font-size="11" fill="#555" font-family='"Liberation Serif", serif' text-anchor="end" textLength="15.95" lengthAdjust="spacingAndGlyphs" stroke="#555" stroke-width="0.22">3.0</text>
<text x="124.60" y="538.60" font-size="11" fill="#555" font-family='"Liberation Serif", serif' text-anchor="middle" textLength="32.40" lengthAdjust="spacingAndGlyphs" stroke="#555" stroke-width="0.22">30000</text>
<text x="167.51" y="538.60" font-size="11" fill="#555" font-family='"Liberation Serif", serif' text-anchor="middle" textLength="32.40" lengthAdjust="spacingAndGlyphs" stroke="#555" stroke-width="0.22">30500</text>
<text x="210.43" y="538.60" font-size="11" fill="#555" font-family='"Liberation Serif", serif' text-anchor="middle" textLength="32.40" lengthAdjust="spacingAndGlyphs" stroke="#555" stroke-width="0.22">31000</text>
<text x="253.35" y="538.60" font-size="11" fill="#555" font-family='"Liberation Serif", serif' text-anchor="middle" textLength="32.40" lengthAdjust="spacingAndGlyphs" stroke="#555" stroke-width="0.22">31500</text>
<text x="296.27" y="538.60" font-size="11" fill="#555" font-family='"Liberation Serif", serif' text-anchor="middle" textLength="32.40" lengthAdjust="spacingAndGlyphs" stroke="#555" stroke-width="0.22">32000</text>
<text x="339.18" y="538.60" font-size="11" fill="#555" font-family='"Liberation Serif", serif' text-anchor="middle" textLength="32.40" lengthAdjust="spacingAndGlyphs" stroke="#555" stroke-width="0.22">32500</text>
<rect x="115.40" y="437.10" width="1.5" height="88.60" fill="#ff2020"/>
<rect x="380.70" y="442.10" width="1.5" height="83.60" fill="#ff2020"/>
<path d="M113.30 435.70 H118.90 L116.10 441.90 Z" fill="#7fa6d8" stroke="#ff4040" stroke-width="0.7"/>
<path d="M113.30 527.30 H118.90 L116.10 520.90 Z" fill="#7fa6d8" stroke="#ff4040" stroke-width="0.7"/>
<path d="M378.70 527.30 H384.30 L381.50 520.90 Z" fill="#7fa6d8" stroke="#ff4040" stroke-width="0.7"/>
<rect x="603.10" y="438.10" width="1" height="86.60" fill="#e6e6e6"/>
<rect x="645.51" y="438.10" width="1" height="86.60" fill="#e6e6e6"/>
<rect x="687.93" y="438.10" width="1" height="86.60" fill="#e6e6e6"/>
<rect x="730.35" y="438.10" width="1" height="86.60" fill="#e6e6e6"/>
<rect x="772.76" y="438.10" width="1" height="86.60" fill="#e6e6e6"/>
<rect x="815.18" y="438.10" width="1" height="86.60" fill="#e6e6e6"/>
<rect x="595.20" y="497.31" width="262.30" height="1" fill="#e6e6e6"/>
<rect x="595.20" y="470.41" width="262.30" height="1" fill="#e6e6e6"/>
<rect x="595.20" y="443.52" width="262.30" height="1" fill="#e6e6e6"/>
<path d="M595.5 524.7 706.8 524.7 707.5 524.2 708.2 524.7 710.9 524.7 711.6 524.2 712.3 524.7 712.9 524.2 713.6 524.7 714.3 523.6 715.0 524.7 719.7 524.7 720.4 524.2 721.1 524.7 723.8 524.7 724.5 523.1 725.2 524.7 725.8 524.7 726.5 524.2 727.2 524.7 729.2 524.7 729.9 524.2 730.6 524.7 731.3 524.2 731.9 524.2 732.6 524.7 733.3 524.7 734.0 524.2 735.3 524.2 736.0 524.7 736.7 524.7 737.4 524.2 738.1 524.2 738.7 524.7 739.4 523.6 740.1 524.2 740.8 523.6 741.5 523.6 742.1 524.2 742.8 524.2 743.5 524.7 744.2 524.7 744.8 522.5 745.5 523.1 746.2 524.2 746.9 523.6 747.6 523.1 748.2 522.5 748.9 523.6 749.6 523.1 750.3 523.6 751.0 520.9 751.6 522.0 752.3 523.6 753.0 520.9 753.7 524.2 754.3 522.0 755.0 523.1 755.7 523.1 756.4 524.2 757.1 522.0 757.7 523.6 758.4 523.1 759.1 524.2 759.8 523.6 760.5 522.5 761.1 522.5 761.8 521.5 762.5 520.9 763.2 523.1 763.8 523.1 764.5 520.9 765.2 522.0 765.9 522.5 766.6 523.1 767.2 523.1 767.9 521.5 768.6 522.5 769.3 524.2 770.0 522.5 770.6 521.5 771.3 519.3 772.0 517.7 772.7 523.1 773.3 523.6 774.0 519.3 774.7 518.2 775.4 519.9 776.1 518.8 776.7 518.2 777.4 519.9 778.1 518.8 778.8 517.7 779.5 515.6 780.1 518.2 780.8 519.9 781.5 516.1 782.2 517.7 782.8 514.5 783.5 520.9 784.2 514.5 784.9 516.1 785.6 516.1 786.2 513.9 786.9 515.0 787.6 515.6 788.3 516.6 789.0 518.8 789.6 516.1 790.3 513.9 791.0 514.5 791.7 517.7 792.3 513.4 793.0 516.1 793.7 512.3 794.4 511.3 795.1 510.2 795.7 513.9 796.4 510.7 797.1 508.0 797.8 504.8 798.5 504.8 799.1 505.3 799.8 504.8 800.5 504.3 801.2 500.0 801.9 508.0 802.5 498.9 803.2 501.0 803.9 500.0 804.6 503.7 805.2 497.8 805.9 496.7 806.6 480.6 807.3 480.1 808.0 482.2 808.6 463.4 809.3 440.3 810.0 465.0 810.7 480.6 811.4 508.6 812.0 509.6 812.7 508.0 813.4 502.6 814.1 508.6 814.7 497.3 815.4 507.5 816.1 494.0 816.8 498.3 817.5 499.4 818.1 488.1 818.8 495.1 819.5 501.6 820.2 498.9 820.9 506.4 821.5 504.8 822.2 508.0 822.9 506.9 823.6 513.9 824.2 513.9 824.9 519.3 825.6 516.1 826.3 520.4 827.0 518.8 827.6 522.0 828.3 520.9 829.0 523.6 829.7 524.2 830.4 524.7 857.5 524.7" fill="none" stroke="#0000ff" stroke-width="1.1" stroke-linejoin="miter"/>
<rect x="766.00" y="446.60" width="13.2" height="11" fill="#fff" stroke="#cfcfcf" stroke-width="1"/>
<rect x="767.50" y="448.10" width="10.4" height="8.2" fill="#0000ff"/>
<text x="783.30" y="455.70" font-size="11" fill="#8a8a8a" font-family='"Liberation Serif", serif' textLength="67.00" lengthAdjust="spacingAndGlyphs" >aida01 1.8.L</text>
<path d="M595.20 438.10 H857.50 V524.70 H595.20 Z" fill="none" stroke="#858585" stroke-width="1.8"/>
<path d="M595.20 524.30 H856.50" stroke="#3c3cdc" stroke-width="1.6"/>
<text x="590.60" y="528.60" font-size="11" fill="#555" font-family='"Liberation Serif", serif' text-anchor="end" textLength="6.38" lengthAdjust="spacingAndGlyphs" stroke="#555" stroke-width="0.22">0</text>
<text x="590.60" y="501.71" font-size="11" fill="#555" font-family='"Liberation Serif", serif' text-anchor="end" textLength="12.76" lengthAdjust="spacingAndGlyphs" stroke="#555" stroke-width="0.22">50</text>
<text x="590.60" y="474.81" font-size="11" fill="#555" font-family='"Liberation Serif", serif' text-anchor="end" textLength="19.14" lengthAdjust="spacingAndGlyphs" stroke="#555" stroke-width="0.22">100</text>
<text x="590.60" y="447.92" font-size="11" fill="#555" font-family='"Liberation Serif", serif' text-anchor="end" textLength="19.14" lengthAdjust="spacingAndGlyphs" stroke="#555" stroke-width="0.22">150</text>
<text x="603.60" y="538.60" font-size="11" fill="#555" font-family='"Liberation Serif", serif' text-anchor="middle" textLength="32.40" lengthAdjust="spacingAndGlyphs" stroke="#555" stroke-width="0.22">30000</text>
<text x="646.01" y="538.60" font-size="11" fill="#555" font-family='"Liberation Serif", serif' text-anchor="middle" textLength="32.40" lengthAdjust="spacingAndGlyphs" stroke="#555" stroke-width="0.22">30500</text>
<text x="688.43" y="538.60" font-size="11" fill="#555" font-family='"Liberation Serif", serif' text-anchor="middle" textLength="32.40" lengthAdjust="spacingAndGlyphs" stroke="#555" stroke-width="0.22">31000</text>
<text x="730.85" y="538.60" font-size="11" fill="#555" font-family='"Liberation Serif", serif' text-anchor="middle" textLength="32.40" lengthAdjust="spacingAndGlyphs" stroke="#555" stroke-width="0.22">31500</text>
<text x="773.26" y="538.60" font-size="11" fill="#555" font-family='"Liberation Serif", serif' text-anchor="middle" textLength="32.40" lengthAdjust="spacingAndGlyphs" stroke="#555" stroke-width="0.22">32000</text>
<text x="815.68" y="538.60" font-size="11" fill="#555" font-family='"Liberation Serif", serif' text-anchor="middle" textLength="32.40" lengthAdjust="spacingAndGlyphs" stroke="#555" stroke-width="0.22">32500</text>
<rect x="594.50" y="437.10" width="1.5" height="88.60" fill="#ff2020"/>
<rect x="856.70" y="442.10" width="1.5" height="83.60" fill="#ff2020"/>
<path d="M592.40 435.70 H598.00 L595.20 441.90 Z" fill="#7fa6d8" stroke="#ff4040" stroke-width="0.7"/>
<path d="M592.40 527.30 H598.00 L595.20 520.90 Z" fill="#7fa6d8" stroke="#ff4040" stroke-width="0.7"/>
<path d="M854.70 527.30 H860.30 L857.50 520.90 Z" fill="#7fa6d8" stroke="#ff4040" stroke-width="0.7"/>
<rect x="1075.90" y="438.10" width="1" height="86.60" fill="#e6e6e6"/>
<rect x="1118.85" y="438.10" width="1" height="86.60" fill="#e6e6e6"/>
<rect x="1161.80" y="438.10" width="1" height="86.60" fill="#e6e6e6"/>
<rect x="1204.75" y="438.10" width="1" height="86.60" fill="#e6e6e6"/>
<rect x="1247.70" y="438.10" width="1" height="86.60" fill="#e6e6e6"/>
<rect x="1290.65" y="438.10" width="1" height="86.60" fill="#e6e6e6"/>
<rect x="1067.90" y="502.55" width="265.60" height="1" fill="#e6e6e6"/>
<rect x="1067.90" y="480.90" width="265.60" height="1" fill="#e6e6e6"/>
<rect x="1067.90" y="459.25" width="265.60" height="1" fill="#e6e6e6"/>
<rect x="1067.90" y="437.60" width="265.60" height="1" fill="#e6e6e6"/>
<path d="M1068.1 524.7 1210.4 524.7 1210.7 481.4 1211.1 481.4 1211.1 524.7 1222.7 524.7 1222.7 481.4 1222.7 524.7 1223.1 481.4 1223.1 524.7 1228.1 524.7 1228.1 481.4 1228.4 481.4 1228.7 524.7 1232.4 524.7 1232.4 481.4 1232.4 524.7 1232.7 524.7 1232.7 481.4 1233.1 524.7 1233.1 481.4 1233.1 524.7 1236.4 524.7 1236.4 481.4 1236.7 481.4 1237.1 524.7 1245.7 524.7 1245.7 481.4 1246.1 481.4 1246.1 524.7 1251.1 524.7 1251.4 481.4 1251.7 481.4 1251.7 524.7 1253.4 524.7 1253.4 481.4 1253.4 524.7 1253.7 481.4 1253.7 524.7 1254.1 524.7 1254.1 481.4 1254.4 524.7 1257.1 524.7 1257.4 481.4 1257.4 524.7 1257.7 524.7 1257.7 438.1 1257.7 524.7 1258.1 524.7 1258.1 481.4 1258.1 524.7 1259.7 524.7 1259.7 481.4 1260.1 524.7 1260.7 524.7 1260.7 481.4 1260.7 524.7 1261.1 481.4 1261.1 524.7 1261.4 524.7 1261.4 481.4 1261.4 524.7 1261.7 524.7 1261.7 481.4 1262.1 524.7 1262.1 438.1 1262.4 524.7 1262.7 524.7 1262.7 481.4 1262.7 524.7 1263.4 524.7 1263.4 481.4 1263.4 524.7 1263.7 481.4 1263.7 524.7 1264.1 524.7 1264.1 481.4 1264.1 524.7 1264.4 524.7 1264.4 481.4 1264.7 524.7 1265.1 481.4 1265.1 524.7 1265.4 481.4 1265.4 524.7 1266.1 524.7 1266.1 481.4 1266.1 524.7 1266.4 524.7 1266.4 481.4 1266.7 524.7 1266.7 481.4 1267.1 524.7 1267.1 481.4 1267.4 524.7 1267.7 481.4 1267.7 524.7 1268.1 524.7 1268.1 481.4 1268.1 524.7 1268.4 481.4 1268.4 438.1 1268.4 524.7 1268.7 524.7 1268.7 481.4 1269.1 524.7 1269.1 481.4 1269.1 524.7 1269.4 524.7 1269.4 481.4 1269.7 481.4 1269.7 524.7 1270.1 524.7 1270.1 481.4 1270.1 524.7 1270.4 524.7 1270.7 481.4 1270.7 524.7 1271.1 524.7 1271.1 481.4 1271.1 524.7 1271.4 481.4 1271.4 524.7 1271.7 524.7 1272.1 481.4 1272.1 524.7 1272.4 481.4 1272.4 524.7 1273.7 524.7 1273.7 481.4 1273.7 524.7 1274.1 481.4 1274.1 524.7 1274.1 481.4 1274.4 481.4 1274.4 524.7 1275.1 524.7 1275.1 481.4 1275.4 524.7 1275.4 481.4 1275.7 481.4 1275.7 524.7 1276.1 524.7 1276.4 481.4 1276.4 524.7 1276.7 524.7 1276.7 438.1 1276.7 524.7 1333.4 524.7" fill="none" stroke="#0000ff" stroke-width="1.1" stroke-linejoin="miter"/>
<rect x="1242.00" y="446.60" width="13.2" height="11" fill="#fff" stroke="#cfcfcf" stroke-width="1"/>
<rect x="1243.50" y="448.10" width="10.4" height="8.2" fill="#0000ff"/>
<text x="1259.30" y="455.70" font-size="11" fill="#8a8a8a" font-family='"Liberation Serif", serif' textLength="67.00" lengthAdjust="spacingAndGlyphs" >aida05 1.8.L</text>
<path d="M1067.90 438.10 H1333.50 V524.70 H1067.90 Z" fill="none" stroke="#858585" stroke-width="1.8"/>
<path d="M1067.90 524.30 H1332.50" stroke="#3c3cdc" stroke-width="1.6"/>
<text x="1063.30" y="528.60" font-size="11" fill="#555" font-family='"Liberation Serif", serif' text-anchor="end" textLength="15.95" lengthAdjust="spacingAndGlyphs" stroke="#555" stroke-width="0.22">0.0</text>
<text x="1063.30" y="506.95" font-size="11" fill="#555" font-family='"Liberation Serif", serif' text-anchor="end" textLength="15.95" lengthAdjust="spacingAndGlyphs" stroke="#555" stroke-width="0.22">0.5</text>
<text x="1063.30" y="485.30" font-size="11" fill="#555" font-family='"Liberation Serif", serif' text-anchor="end" textLength="15.95" lengthAdjust="spacingAndGlyphs" stroke="#555" stroke-width="0.22">1.0</text>
<text x="1063.30" y="463.65" font-size="11" fill="#555" font-family='"Liberation Serif", serif' text-anchor="end" textLength="15.95" lengthAdjust="spacingAndGlyphs" stroke="#555" stroke-width="0.22">1.5</text>
<text x="1063.30" y="442.00" font-size="11" fill="#555" font-family='"Liberation Serif", serif' text-anchor="end" textLength="15.95" lengthAdjust="spacingAndGlyphs" stroke="#555" stroke-width="0.22">2.0</text>
<text x="1076.40" y="538.60" font-size="11" fill="#555" font-family='"Liberation Serif", serif' text-anchor="middle" textLength="32.40" lengthAdjust="spacingAndGlyphs" stroke="#555" stroke-width="0.22">30000</text>
<text x="1119.35" y="538.60" font-size="11" fill="#555" font-family='"Liberation Serif", serif' text-anchor="middle" textLength="32.40" lengthAdjust="spacingAndGlyphs" stroke="#555" stroke-width="0.22">30500</text>
<text x="1162.30" y="538.60" font-size="11" fill="#555" font-family='"Liberation Serif", serif' text-anchor="middle" textLength="32.40" lengthAdjust="spacingAndGlyphs" stroke="#555" stroke-width="0.22">31000</text>
<text x="1205.25" y="538.60" font-size="11" fill="#555" font-family='"Liberation Serif", serif' text-anchor="middle" textLength="32.40" lengthAdjust="spacingAndGlyphs" stroke="#555" stroke-width="0.22">31500</text>
<text x="1248.20" y="538.60" font-size="11" fill="#555" font-family='"Liberation Serif", serif' text-anchor="middle" textLength="32.40" lengthAdjust="spacingAndGlyphs" stroke="#555" stroke-width="0.22">32000</text>
<text x="1291.15" y="538.60" font-size="11" fill="#555" font-family='"Liberation Serif", serif' text-anchor="middle" textLength="32.40" lengthAdjust="spacingAndGlyphs" stroke="#555" stroke-width="0.22">32500</text>
<rect x="1067.20" y="437.10" width="1.5" height="88.60" fill="#ff2020"/>
<rect x="1332.70" y="442.10" width="1.5" height="83.60" fill="#ff2020"/>
<path d="M1065.10 435.70 H1070.70 L1067.90 441.90 Z" fill="#7fa6d8" stroke="#ff4040" stroke-width="0.7"/>
<path d="M1065.10 527.30 H1070.70 L1067.90 520.90 Z" fill="#7fa6d8" stroke="#ff4040" stroke-width="0.7"/>
<path d="M1330.70 527.30 H1336.30 L1333.50 520.90 Z" fill="#7fa6d8" stroke="#ff4040" stroke-width="0.7"/>
<rect x="124.10" y="560.10" width="1" height="86.60" fill="#e6e6e6"/>
<rect x="167.01" y="560.10" width="1" height="86.60" fill="#e6e6e6"/>
<rect x="209.93" y="560.10" width="1" height="86.60" fill="#e6e6e6"/>
<rect x="252.85" y="560.10" width="1" height="86.60" fill="#e6e6e6"/>
<rect x="295.77" y="560.10" width="1" height="86.60" fill="#e6e6e6"/>
<rect x="338.68" y="560.10" width="1" height="86.60" fill="#e6e6e6"/>
<rect x="116.10" y="617.33" width="265.40" height="1" fill="#e6e6e6"/>
<rect x="116.10" y="588.47" width="265.40" height="1" fill="#e6e6e6"/>
<rect x="116.10" y="559.60" width="265.40" height="1" fill="#e6e6e6"/>
<path d="M116.3 646.7 260.3 646.7 260.3 617.8 260.6 617.8 260.6 646.7 272.6 646.7 272.6 617.8 272.6 646.7 274.3 646.7 274.6 617.8 274.6 646.7 274.9 646.7 274.9 617.8 274.9 646.7 275.9 646.7 276.3 617.8 276.3 646.7 279.3 646.7 279.3 617.8 279.6 646.7 279.9 617.8 279.9 646.7 281.3 646.7 281.3 617.8 281.3 646.7 281.6 617.8 281.6 646.7 281.9 646.7 281.9 617.8 281.9 646.7 282.6 646.7 282.6 617.8 282.6 646.7 282.9 617.8 282.9 646.7 284.6 646.7 284.6 617.8 284.9 646.7 288.9 646.7 288.9 617.8 288.9 646.7 289.3 617.8 289.3 646.7 291.3 646.7 291.6 617.8 291.6 646.7 291.6 617.8 291.9 646.7 296.3 646.7 296.6 617.8 296.6 646.7 297.6 646.7 297.6 617.8 297.9 646.7 297.9 617.8 297.9 646.7 298.9 646.7 298.9 617.8 299.3 646.7 299.3 617.8 299.3 646.7 300.3 646.7 300.3 617.8 300.6 646.7 301.3 646.7 301.3 617.8 301.6 646.7 302.3 646.7 302.3 617.8 302.9 617.8 302.9 646.7 303.6 646.7 303.6 617.8 303.9 646.7 303.9 617.8 303.9 646.7 304.3 646.7 304.3 617.8 304.6 617.8 304.6 646.7 305.3 646.7 305.3 617.8 305.3 646.7 305.9 646.7 305.9 617.8 306.3 646.7 306.3 617.8 306.6 646.7 306.6 617.8 306.9 646.7 306.9 617.8 307.3 646.7 307.6 646.7 307.9 617.8 307.9 646.7 308.6 646.7 308.6 617.8 308.6 646.7 308.9 646.7 308.9 617.8 309.3 646.7 309.6 646.7 309.6 617.8 309.6 646.7 310.3 646.7 310.3 617.8 310.3 646.7 310.6 646.7 310.6 617.8 310.6 646.7 311.3 646.7 311.3 589.0 311.3 646.7 311.6 646.7 311.6 617.8 311.6 646.7 311.9 646.7 311.9 589.0 311.9 646.7 312.6 646.7 312.6 617.8 312.6 646.7 312.9 646.7 312.9 617.8 313.3 646.7 313.3 560.1 313.6 617.8 313.6 646.7 313.9 646.7 313.9 589.0 314.3 646.7 314.6 617.8 314.6 646.7 314.9 646.7 315.3 617.8 315.3 646.7 315.3 617.8 315.6 589.0 315.6 646.7 315.9 646.7 315.9 617.8 315.9 646.7 316.9 646.7 316.9 617.8 316.9 646.7 317.3 617.8 317.3 646.7 317.6 646.7 317.9 617.8 317.9 646.7 318.3 617.8 318.3 646.7 318.6 646.7 318.6 589.0 318.6 646.7 318.9 617.8 318.9 646.7 318.9 617.8 319.3 646.7 320.6 646.7 320.6 617.8 320.6 646.7 321.3 646.7 321.3 617.8 321.3 646.7 322.6 646.7 322.9 617.8 323.9 617.8 323.9 646.7 381.6 646.7" fill="none" stroke="#0000ff" stroke-width="1.1" stroke-linejoin="miter"/>
<rect x="290.00" y="568.60" width="13.2" height="11" fill="#fff" stroke="#cfcfcf" stroke-width="1"/>
<rect x="291.50" y="570.10" width="10.4" height="8.2" fill="#0000ff"/>
<text x="307.30" y="577.70" font-size="11" fill="#8a8a8a" font-family='"Liberation Serif", serif' textLength="67.00" lengthAdjust="spacingAndGlyphs" >aida15 1.8.L</text>
<path d="M116.10 560.10 H381.50 V646.70 H116.10 Z" fill="none" stroke="#858585" stroke-width="1.8"/>
<path d="M116.10 646.30 H380.50" stroke="#3c3cdc" stroke-width="1.6"/>
<text x="111.50" y="650.60" font-size="11" fill="#555" font-family='"Liberation Serif", serif' text-anchor="end" textLength="15.95" lengthAdjust="spacingAndGlyphs" stroke="#555" stroke-width="0.22">0.0</text>
<text x="111.50" y="621.73" font-size="11" fill="#555" font-family='"Liberation Serif", serif' text-anchor="end" textLength="15.95" lengthAdjust="spacingAndGlyphs" stroke="#555" stroke-width="0.22">1.0</text>
<text x="111.50" y="592.87" font-size="11" fill="#555" font-family='"Liberation Serif", serif' text-anchor="end" textLength="15.95" lengthAdjust="spacingAndGlyphs" stroke="#555" stroke-width="0.22">2.0</text>
<text x="111.50" y="564.00" font-size="11" fill="#555" font-family='"Liberation Serif", serif' text-anchor="end" textLength="15.95" lengthAdjust="spacingAndGlyphs" stroke="#555" stroke-width="0.22">3.0</text>
<text x="124.60" y="660.60" font-size="11" fill="#555" font-family='"Liberation Serif", serif' text-anchor="middle" textLength="32.40" lengthAdjust="spacingAndGlyphs" stroke="#555" stroke-width="0.22">30000</text>
<text x="167.51" y="660.60" font-size="11" fill="#555" font-family='"Liberation Serif", serif' text-anchor="middle" textLength="32.40" lengthAdjust="spacingAndGlyphs" stroke="#555" stroke-width="0.22">30500</text>
<text x="210.43" y="660.60" font-size="11" fill="#555" font-family='"Liberation Serif", serif' text-anchor="middle" textLength="32.40" lengthAdjust="spacingAndGlyphs" stroke="#555" stroke-width="0.22">31000</text>
<text x="253.35" y="660.60" font-size="11" fill="#555" font-family='"Liberation Serif", serif' text-anchor="middle" textLength="32.40" lengthAdjust="spacingAndGlyphs" stroke="#555" stroke-width="0.22">31500</text>
<text x="296.27" y="660.60" font-size="11" fill="#555" font-family='"Liberation Serif", serif' text-anchor="middle" textLength="32.40" lengthAdjust="spacingAndGlyphs" stroke="#555" stroke-width="0.22">32000</text>
<text x="339.18" y="660.60" font-size="11" fill="#555" font-family='"Liberation Serif", serif' text-anchor="middle" textLength="32.40" lengthAdjust="spacingAndGlyphs" stroke="#555" stroke-width="0.22">32500</text>
<rect x="115.40" y="559.10" width="1.5" height="88.60" fill="#ff2020"/>
<rect x="380.70" y="564.10" width="1.5" height="83.60" fill="#ff2020"/>
<path d="M113.30 557.70 H118.90 L116.10 563.90 Z" fill="#7fa6d8" stroke="#ff4040" stroke-width="0.7"/>
<path d="M113.30 649.30 H118.90 L116.10 642.90 Z" fill="#7fa6d8" stroke="#ff4040" stroke-width="0.7"/>
<path d="M378.70 649.30 H384.30 L381.50 642.90 Z" fill="#7fa6d8" stroke="#ff4040" stroke-width="0.7"/>
<rect x="603.20" y="560.10" width="1" height="86.60" fill="#e6e6e6"/>
<rect x="645.59" y="560.10" width="1" height="86.60" fill="#e6e6e6"/>
<rect x="687.99" y="560.10" width="1" height="86.60" fill="#e6e6e6"/>
<rect x="730.39" y="560.10" width="1" height="86.60" fill="#e6e6e6"/>
<rect x="772.79" y="560.10" width="1" height="86.60" fill="#e6e6e6"/>
<rect x="815.19" y="560.10" width="1" height="86.60" fill="#e6e6e6"/>
<rect x="595.30" y="621.81" width="262.20" height="1" fill="#e6e6e6"/>
<rect x="595.30" y="597.41" width="262.20" height="1" fill="#e6e6e6"/>
<rect x="595.30" y="573.02" width="262.20" height="1" fill="#e6e6e6"/>
<path d="M595.6 646.7 690.6 646.7 691.3 646.5 692.0 646.7 693.3 646.7 694.0 646.5 694.7 646.7 700.1 646.7 700.8 646.5 701.5 646.7 705.5 646.7 706.2 646.5 706.9 646.7 707.6 646.2 708.3 646.5 708.9 646.7 709.6 646.7 710.3 646.5 711.0 646.7 712.3 646.7 713.0 646.5 713.7 646.7 715.0 646.7 715.7 646.5 716.4 646.7 717.8 646.7 718.4 646.5 719.1 646.7 719.8 646.7 720.5 646.5 721.1 646.5 721.8 646.7 722.5 646.7 723.2 646.2 723.9 646.7 725.2 646.7 725.9 646.2 726.6 646.7 727.2 646.7 727.9 646.2 728.6 646.7 729.3 646.7 730.0 646.5 730.6 646.7 731.3 646.5 732.0 646.7 732.7 646.2 733.4 646.7 734.7 646.7 735.4 646.5 736.1 646.5 736.7 646.0 737.4 645.7 738.1 646.2 738.8 646.5 739.5 646.2 740.1 646.0 741.5 646.0 742.2 645.7 742.9 646.5 743.5 645.5 744.2 646.7 744.9 645.7 745.6 645.7 746.2 646.2 746.9 646.0 747.6 645.2 748.3 646.0 749.0 645.5 749.6 645.2 750.3 646.0 751.0 645.2 751.7 645.0 752.3 645.2 753.0 646.2 753.7 645.2 754.4 645.0 755.1 644.7 755.7 645.0 756.4 646.0 757.1 644.0 757.8 644.7 758.5 646.0 759.1 645.5 759.8 645.2 760.5 643.5 761.2 643.0 761.8 643.5 762.5 639.6 763.2 640.4 763.9 638.6 764.6 639.6 765.2 639.9 765.9 636.9 766.6 637.4 767.3 636.7 768.0 633.8 768.6 633.3 769.3 636.7 770.0 636.5 770.7 630.4 771.3 634.5 772.0 631.8 772.7 635.5 773.4 633.8 774.1 635.7 774.7 632.8 775.4 632.3 776.1 631.3 776.8 633.5 777.4 630.8 778.1 632.8 778.8 630.4 779.5 631.1 780.2 632.1 780.8 635.5 781.5 632.3 782.2 630.8 782.9 629.9 783.6 635.7 784.2 629.6 784.9 628.9 785.6 627.9 786.3 627.4 786.9 632.6 787.6 624.7 788.3 630.1 789.0 626.2 789.7 623.0 790.3 623.0 791.0 618.4 791.7 622.3 792.4 622.3 793.1 617.2 793.7 613.0 794.4 618.2 795.1 614.5 795.8 613.0 796.4 618.6 797.1 616.0 797.8 617.2 798.5 614.7 799.2 613.5 799.8 611.1 800.5 607.4 801.2 606.4 801.9 607.2 802.5 605.2 803.2 607.4 803.9 603.8 804.6 609.6 805.3 600.4 805.9 598.6 806.6 593.8 807.3 595.0 808.0 591.8 808.7 572.3 809.3 573.5 810.0 571.1 810.7 578.4 811.4 596.4 812.0 613.5 812.7 612.5 813.4 605.7 814.1 605.5 814.8 604.0 815.4 603.8 816.1 607.7 816.8 611.8 817.5 616.9 818.2 613.5 818.8 619.6 819.5 626.0 820.2 628.4 820.9 636.9 821.5 635.2 822.2 637.9 822.9 639.9 823.6 642.6 824.3 643.0 824.9 643.3 825.6 642.6 826.3 644.3 827.0 644.7 827.7 645.5 828.3 645.2 829.0 645.7 829.7 646.2 830.4 646.7 831.0 646.5 831.7 646.7 857.5 646.7" fill="none" stroke="#0000ff" stroke-width="1.1" stroke-linejoin="miter"/>
<rect x="766.00" y="568.60" width="13.2" height="11" fill="#fff" stroke="#cfcfcf" stroke-width="1"/>
<rect x="767.50" y="570.10" width="10.4" height="8.2" fill="#0000ff"/>
<text x="783.30" y="577.70" font-size="11" fill="#8a8a8a" font-family='"Liberation Serif", serif' textLength="67.00" lengthAdjust="spacingAndGlyphs" >aida03 1.8.L</text>
<path d="M595.30 560.10 H857.50 V646.70 H595.30 Z" fill="none" stroke="#858585" stroke-width="1.8"/>
<path d="M595.30 646.30 H856.50" stroke="#3c3cdc" stroke-width="1.6"/>
<text x="590.70" y="650.60" font-size="11" fill="#555" font-family='"Liberation Serif", serif' text-anchor="end" textLength="6.38" lengthAdjust="spacingAndGlyphs" stroke="#555" stroke-width="0.22">0</text>
<text x="590.70" y="626.21" font-size="11" fill="#555" font-family='"Liberation Serif", serif' text-anchor="end" textLength="19.14" lengthAdjust="spacingAndGlyphs" stroke="#555" stroke-width="0.22">100</text>
<text x="590.70" y="601.81" font-size="11" fill="#555" font-family='"Liberation Serif", serif' text-anchor="end" textLength="19.14" lengthAdjust="spacingAndGlyphs" stroke="#555" stroke-width="0.22">200</text>
<text x="590.70" y="577.42" font-size="11" fill="#555" font-family='"Liberation Serif", serif' text-anchor="end" textLength="19.14" lengthAdjust="spacingAndGlyphs" stroke="#555" stroke-width="0.22">300</text>
<text x="603.70" y="660.60" font-size="11" fill="#555" font-family='"Liberation Serif", serif' text-anchor="middle" textLength="32.40" lengthAdjust="spacingAndGlyphs" stroke="#555" stroke-width="0.22">30000</text>
<text x="646.09" y="660.60" font-size="11" fill="#555" font-family='"Liberation Serif", serif' text-anchor="middle" textLength="32.40" lengthAdjust="spacingAndGlyphs" stroke="#555" stroke-width="0.22">30500</text>
<text x="688.49" y="660.60" font-size="11" fill="#555" font-family='"Liberation Serif", serif' text-anchor="middle" textLength="32.40" lengthAdjust="spacingAndGlyphs" stroke="#555" stroke-width="0.22">31000</text>
<text x="730.89" y="660.60" font-size="11" fill="#555" font-family='"Liberation Serif", serif' text-anchor="middle" textLength="32.40" lengthAdjust="spacingAndGlyphs" stroke="#555" stroke-width="0.22">31500</text>
<text x="773.29" y="660.60" font-size="11" fill="#555" font-family='"Liberation Serif", serif' text-anchor="middle" textLength="32.40" lengthAdjust="spacingAndGlyphs" stroke="#555" stroke-width="0.22">32000</text>
<text x="815.69" y="660.60" font-size="11" fill="#555" font-family='"Liberation Serif", serif' text-anchor="middle" textLength="32.40" lengthAdjust="spacingAndGlyphs" stroke="#555" stroke-width="0.22">32500</text>
<rect x="594.60" y="559.10" width="1.5" height="88.60" fill="#ff2020"/>
<rect x="856.70" y="564.10" width="1.5" height="83.60" fill="#ff2020"/>
<path d="M592.50 557.70 H598.10 L595.30 563.90 Z" fill="#7fa6d8" stroke="#ff4040" stroke-width="0.7"/>
<path d="M592.50 649.30 H598.10 L595.30 642.90 Z" fill="#7fa6d8" stroke="#ff4040" stroke-width="0.7"/>
<path d="M854.70 649.30 H860.30 L857.50 642.90 Z" fill="#7fa6d8" stroke="#ff4040" stroke-width="0.7"/>
<rect x="1076.29" y="560.10" width="1" height="86.60" fill="#e6e6e6"/>
<rect x="1119.18" y="560.10" width="1" height="86.60" fill="#e6e6e6"/>
<rect x="1162.06" y="560.10" width="1" height="86.60" fill="#e6e6e6"/>
<rect x="1204.95" y="560.10" width="1" height="86.60" fill="#e6e6e6"/>
<rect x="1247.83" y="560.10" width="1" height="86.60" fill="#e6e6e6"/>
<rect x="1290.72" y="560.10" width="1" height="86.60" fill="#e6e6e6"/>
<rect x="1068.30" y="624.55" width="265.20" height="1" fill="#e6e6e6"/>
<rect x="1068.30" y="602.90" width="265.20" height="1" fill="#e6e6e6"/>
<rect x="1068.30" y="581.25" width="265.20" height="1" fill="#e6e6e6"/>
<rect x="1068.30" y="559.60" width="265.20" height="1" fill="#e6e6e6"/>
<path d="M1068.5 646.7 1226.1 646.7 1226.5 603.4 1226.8 603.4 1226.8 646.7 1229.5 646.7 1229.5 603.4 1229.8 603.4 1230.1 646.7 1234.5 646.7 1234.5 603.4 1234.8 603.4 1234.8 646.7 1237.1 646.7 1237.1 603.4 1237.5 603.4 1237.8 646.7 1240.5 646.7 1240.8 603.4 1241.1 603.4 1241.1 646.7 1246.1 646.7 1246.5 603.4 1246.5 646.7 1246.8 646.7 1246.8 560.1 1246.8 603.4 1247.1 603.4 1247.1 646.7 1247.1 603.4 1247.5 646.7 1248.1 646.7 1248.1 603.4 1248.5 646.7 1248.8 603.4 1248.8 646.7 1248.8 603.4 1249.1 646.7 1249.5 646.7 1249.5 603.4 1249.8 646.7 1249.8 603.4 1250.1 646.7 1250.1 603.4 1250.1 646.7 1250.5 646.7 1250.5 603.4 1250.5 646.7 1251.1 646.7 1251.5 603.4 1251.5 646.7 1251.8 646.7 1251.8 603.4 1251.8 646.7 1252.1 646.7 1252.1 603.4 1252.5 646.7 1252.5 603.4 1252.5 646.7 1252.8 646.7 1252.8 603.4 1253.1 646.7 1253.5 646.7 1253.5 603.4 1253.5 646.7 1253.8 646.7 1253.8 603.4 1254.1 646.7 1254.1 603.4 1254.5 603.4 1254.5 646.7 1257.8 646.7 1258.1 603.4 1259.5 603.4 1259.5 646.7 1261.1 646.7 1261.5 603.4 1261.5 646.7 1261.8 646.7 1261.8 603.4 1261.8 646.7 1262.1 646.7 1262.1 603.4 1262.1 646.7 1262.5 646.7 1262.5 603.4 1262.5 646.7 1262.8 646.7 1262.8 603.4 1262.8 646.7 1263.8 646.7 1263.8 603.4 1263.8 646.7 1264.1 603.4 1264.1 560.1 1264.1 646.7 1265.1 646.7 1265.1 603.4 1265.5 646.7 1266.1 646.7 1266.1 603.4 1266.5 646.7 1266.8 646.7 1266.8 603.4 1266.8 646.7 1267.1 603.4 1267.1 646.7 1267.1 603.4 1267.5 646.7 1267.5 603.4 1267.5 646.7 1267.8 603.4 1267.8 646.7 1269.1 646.7 1269.5 603.4 1269.5 646.7 1269.8 646.7 1269.8 603.4 1269.8 646.7 1272.5 646.7 1272.5 603.4 1272.5 646.7 1273.5 646.7 1273.5 603.4 1273.8 646.7 1274.1 646.7 1274.1 603.4 1274.1 646.7 1275.8 646.7 1275.8 560.1 1275.8 646.7 1277.5 646.7 1277.5 603.4 1277.5 646.7 1277.8 646.7 1277.8 603.4 1277.8 646.7 1278.1 646.7 1278.1 603.4 1278.1 646.7 1278.5 646.7 1278.5 603.4 1278.5 646.7 1281.8 646.7 1281.8 603.4 1281.8 646.7 1282.1 646.7 1282.1 603.4 1282.1 646.7 1282.5 646.7 1282.5 603.4 1282.5 646.7 1282.8 646.7 1282.8 560.1 1282.8 646.7 1283.1 603.4 1283.1 646.7 1283.1 603.4 1283.5 646.7 1283.5 560.1 1283.8 646.7 1283.8 603.4 1284.1 646.7 1284.1 603.4 1284.5 646.7 1284.5 560.1 1284.5 603.4 1284.8 646.7 1284.8 603.4 1284.8 646.7 1285.1 603.4 1285.1 646.7 1285.5 603.4 1285.5 646.7 1285.8 646.7 1285.8 603.4 1286.1 603.4 1286.1 646.7 1286.1 603.4 1286.5 646.7 1333.5 646.7" fill="none" stroke="#0000ff" stroke-width="1.1" stroke-linejoin="miter"/>
<rect x="1242.00" y="568.60" width="13.2" height="11" fill="#fff" stroke="#cfcfcf" stroke-width="1"/>
<rect x="1243.50" y="570.10" width="10.4" height="8.2" fill="#0000ff"/>
<text x="1259.30" y="577.70" font-size="11" fill="#8a8a8a" font-family='"Liberation Serif", serif' textLength="67.00" lengthAdjust="spacingAndGlyphs" >aida12 1.8.L</text>
<path d="M1068.30 560.10 H1333.50 V646.70 H1068.30 Z" fill="none" stroke="#858585" stroke-width="1.8"/>
<path d="M1068.30 646.30 H1332.50" stroke="#3c3cdc" stroke-width="1.6"/>
<text x="1063.70" y="650.60" font-size="11" fill="#555" font-family='"Liberation Serif", serif' text-anchor="end" textLength="15.95" lengthAdjust="spacingAndGlyphs" stroke="#555" stroke-width="0.22">0.0</text>
<text x="1063.70" y="628.95" font-size="11" fill="#555" font-family='"Liberation Serif", serif' text-anchor="end" textLength="15.95" lengthAdjust="spacingAndGlyphs" stroke="#555" stroke-width="0.22">0.5</text>
<text x="1063.70" y="607.30" font-size="11" fill="#555" font-family='"Liberation Serif", serif' text-anchor="end" textLength="15.95" lengthAdjust="spacingAndGlyphs" stroke="#555" stroke-width="0.22">1.0</text>
<text x="1063.70" y="585.65" font-size="11" fill="#555" font-family='"Liberation Serif", serif' text-anchor="end" textLength="15.95" lengthAdjust="spacingAndGlyphs" stroke="#555" stroke-width="0.22">1.5</text>
<text x="1063.70" y="564.00" font-size="11" fill="#555" font-family='"Liberation Serif", serif' text-anchor="end" textLength="15.95" lengthAdjust="spacingAndGlyphs" stroke="#555" stroke-width="0.22">2.0</text>
<text x="1076.79" y="660.60" font-size="11" fill="#555" font-family='"Liberation Serif", serif' text-anchor="middle" textLength="32.40" lengthAdjust="spacingAndGlyphs" stroke="#555" stroke-width="0.22">30000</text>
<text x="1119.68" y="660.60" font-size="11" fill="#555" font-family='"Liberation Serif", serif' text-anchor="middle" textLength="32.40" lengthAdjust="spacingAndGlyphs" stroke="#555" stroke-width="0.22">30500</text>
<text x="1162.56" y="660.60" font-size="11" fill="#555" font-family='"Liberation Serif", serif' text-anchor="middle" textLength="32.40" lengthAdjust="spacingAndGlyphs" stroke="#555" stroke-width="0.22">31000</text>
<text x="1205.45" y="660.60" font-size="11" fill="#555" font-family='"Liberation Serif", serif' text-anchor="middle" textLength="32.40" lengthAdjust="spacingAndGlyphs" stroke="#555" stroke-width="0.22">31500</text>
<text x="1248.33" y="660.60" font-size="11" fill="#555" font-family='"Liberation Serif", serif' text-anchor="middle" textLength="32.40" lengthAdjust="spacingAndGlyphs" stroke="#555" stroke-width="0.22">32000</text>
<text x="1291.22" y="660.60" font-size="11" fill="#555" font-family='"Liberation Serif", serif' text-anchor="middle" textLength="32.40" lengthAdjust="spacingAndGlyphs" stroke="#555" stroke-width="0.22">32500</text>
<rect x="1067.60" y="559.10" width="1.5" height="88.60" fill="#ff2020"/>
<rect x="1332.70" y="564.10" width="1.5" height="83.60" fill="#ff2020"/>
<path d="M1065.50 557.70 H1071.10 L1068.30 563.90 Z" fill="#7fa6d8" stroke="#ff4040" stroke-width="0.7"/>
<path d="M1065.50 649.30 H1071.10 L1068.30 642.90 Z" fill="#7fa6d8" stroke="#ff4040" stroke-width="0.7"/>
<path d="M1330.70 649.30 H1336.30 L1333.50 642.90 Z" fill="#7fa6d8" stroke="#ff4040" stroke-width="0.7"/>
<rect x="124.10" y="682.10" width="1" height="86.60" fill="#e6e6e6"/>
<rect x="167.01" y="682.10" width="1" height="86.60" fill="#e6e6e6"/>
<rect x="209.93" y="682.10" width="1" height="86.60" fill="#e6e6e6"/>
<rect x="252.85" y="682.10" width="1" height="86.60" fill="#e6e6e6"/>
<rect x="295.77" y="682.10" width="1" height="86.60" fill="#e6e6e6"/>
<rect x="338.68" y="682.10" width="1" height="86.60" fill="#e6e6e6"/>
<rect x="116.10" y="739.33" width="265.40" height="1" fill="#e6e6e6"/>
<rect x="116.10" y="710.47" width="265.40" height="1" fill="#e6e6e6"/>
<rect x="116.10" y="681.60" width="265.40" height="1" fill="#e6e6e6"/>
<path d="M116.3 768.7 266.9 768.7 266.9 739.8 267.6 739.8 267.6 768.7 281.6 768.7 281.9 739.8 281.9 768.7 283.6 768.7 283.6 739.8 283.6 768.7 283.9 768.7 283.9 739.8 283.9 768.7 285.3 768.7 285.3 739.8 285.3 768.7 285.6 768.7 285.9 711.0 285.9 768.7 286.3 739.8 286.3 768.7 286.6 768.7 286.9 739.8 286.9 768.7 286.9 739.8 287.3 768.7 287.6 768.7 287.6 739.8 287.9 768.7 291.3 768.7 291.3 739.8 291.3 768.7 291.6 768.7 291.6 739.8 291.9 768.7 291.9 739.8 291.9 768.7 292.3 739.8 292.3 768.7 292.6 711.0 292.6 768.7 292.9 768.7 292.9 739.8 292.9 768.7 293.3 739.8 293.3 768.7 293.6 739.8 293.6 768.7 293.9 739.8 293.9 768.7 294.3 739.8 294.3 768.7 294.3 739.8 294.6 768.7 294.6 739.8 294.6 768.7 294.9 739.8 294.9 768.7 295.6 768.7 295.6 739.8 295.9 768.7 295.9 739.8 295.9 768.7 296.3 768.7 296.3 739.8 296.3 768.7 296.9 768.7 297.3 739.8 297.3 768.7 297.6 768.7 297.6 739.8 297.6 768.7 297.9 739.8 297.9 768.7 298.3 768.7 298.6 739.8 298.6 768.7 298.9 739.8 298.9 768.7 299.9 768.7 299.9 739.8 300.3 739.8 300.3 768.7 300.3 739.8 300.6 739.8 300.6 768.7 300.9 739.8 301.3 739.8 301.3 768.7 301.6 768.7 301.9 739.8 301.9 768.7 303.6 768.7 303.6 739.8 303.9 768.7 303.9 711.0 303.9 768.7 304.3 739.8 304.3 768.7 304.6 768.7 304.9 739.8 304.9 768.7 305.6 768.7 305.6 739.8 305.6 768.7 305.9 739.8 305.9 768.7 305.9 739.8 306.3 739.8 306.3 768.7 306.6 768.7 306.9 739.8 306.9 768.7 306.9 739.8 307.3 768.7 307.3 739.8 307.6 768.7 307.6 739.8 307.6 768.7 307.9 768.7 308.3 739.8 308.3 711.0 308.3 768.7 308.6 768.7 308.6 739.8 308.6 768.7 308.9 739.8 308.9 768.7 308.9 739.8 309.3 739.8 309.3 768.7 309.6 739.8 309.6 768.7 309.9 739.8 309.9 768.7 310.3 768.7 310.3 739.8 310.6 768.7 310.6 739.8 310.6 768.7 310.9 768.7 310.9 739.8 311.3 768.7 311.6 739.8 311.6 768.7 311.9 711.0 311.9 768.7 312.6 768.7 312.6 711.0 312.6 739.8 312.9 768.7 312.9 739.8 312.9 768.7 313.3 739.8 313.3 768.7 313.3 739.8 313.6 739.8 313.6 711.0 313.6 768.7 313.6 739.8 313.9 739.8 313.9 768.7 314.3 768.7 314.3 739.8 314.6 711.0 314.6 768.7 314.6 739.8 314.9 739.8 314.9 768.7 316.3 768.7 316.3 711.0 316.6 768.7 317.6 768.7 317.6 739.8 317.6 768.7 317.9 711.0 317.9 768.7 317.9 739.8 318.3 768.7 318.6 768.7 318.6 682.1 318.6 739.8 318.9 768.7 319.6 768.7 319.6 682.1 319.6 768.7 320.3 768.7 320.6 682.1 320.6 768.7 321.3 768.7 321.6 682.1 321.6 768.7 322.6 768.7 322.6 739.8 322.6 768.7 322.9 711.0 322.9 768.7 323.6 768.7 323.9 711.0 323.9 768.7 325.6 768.7 325.6 711.0 325.6 768.7 326.3 768.7 326.6 739.8 326.6 768.7 326.9 768.7 326.9 739.8 326.9 768.7 327.3 768.7 327.3 739.8 327.3 768.7 327.6 682.1 327.6 768.7 328.3 768.7 328.3 739.8 328.3 768.7 331.3 768.7 331.3 739.8 331.6 768.7 333.3 768.7 333.3 739.8 333.3 768.7 334.9 768.7 334.9 739.8 334.9 768.7 335.6 768.7 335.6 739.8 335.6 768.7 336.3 768.7 336.3 739.8 336.3 768.7 336.9 768.7 336.9 739.8 336.9 768.7 337.6 768.7 337.9 739.8 337.9 768.7 337.9 739.8 338.3 768.7 338.6 768.7 338.6 739.8 338.6 768.7 338.9 768.7 338.9 711.0 339.3 739.8 339.3 768.7 339.6 768.7 339.9 739.8 339.9 768.7 340.3 711.0 340.3 768.7 340.6 739.8 340.6 768.7 340.6 739.8 340.9 768.7 340.9 739.8 341.3 768.7 341.3 711.0 341.6 768.7 343.3 768.7 343.3 739.8 343.6 768.7 381.6 768.7" fill="none" stroke="#0000ff" stroke-width="1.1" stroke-linejoin="miter"/>
<rect x="290.00" y="690.60" width="13.2" height="11" fill="#fff" stroke="#cfcfcf" stroke-width="1"/>
<rect x="291.50" y="692.10" width="10.4" height="8.2" fill="#0000ff"/>
<text x="307.30" y="699.70" font-size="11" fill="#8a8a8a" font-family='"Liberation Serif", serif' textLength="67.00" lengthAdjust="spacingAndGlyphs" >aida10 1.8.L</text>
<path d="M116.10 682.10 H381.50 V768.70 H116.10 Z" fill="none" stroke="#858585" stroke-width="1.8"/>
<path d="M116.10 768.30 H380.50" stroke="#3c3cdc" stroke-width="1.6"/>
<text x="111.50" y="772.60" font-size="11" fill="#555" font-family='"Liberation Serif", serif' text-anchor="end" textLength="15.95" lengthAdjust="spacingAndGlyphs" stroke="#555" stroke-width="0.22">0.0</text>
<text x="111.50" y="743.73" font-size="11" fill="#555" font-family='"Liberation Serif", serif' text-anchor="end" textLength="15.95" lengthAdjust="spacingAndGlyphs" stroke="#555" stroke-width="0.22">1.0</text>
<text x="111.50" y="714.87" font-size="11" fill="#555" font-family='"Liberation Serif", serif' text-anchor="end" textLength="15.95" lengthAdjust="spacingAndGlyphs" stroke="#555" stroke-width="0.22">2.0</text>
<text x="111.50" y="686.00" font-size="11" fill="#555" font-family='"Liberation Serif", serif' text-anchor="end" textLength="15.95" lengthAdjust="spacingAndGlyphs" stroke="#555" stroke-width="0.22">3.0</text>
<text x="124.60" y="782.60" font-size="11" fill="#555" font-family='"Liberation Serif", serif' text-anchor="middle" textLength="32.40" lengthAdjust="spacingAndGlyphs" stroke="#555" stroke-width="0.22">30000</text>
<text x="167.51" y="782.60" font-size="11" fill="#555" font-family='"Liberation Serif", serif' text-anchor="middle" textLength="32.40" lengthAdjust="spacingAndGlyphs" stroke="#555" stroke-width="0.22">30500</text>
<text x="210.43" y="782.60" font-size="11" fill="#555" font-family='"Liberation Serif", serif' text-anchor="middle" textLength="32.40" lengthAdjust="spacingAndGlyphs" stroke="#555" stroke-width="0.22">31000</text>
<text x="253.35" y="782.60" font-size="11" fill="#555" font-family='"Liberation Serif", serif' text-anchor="middle" textLength="32.40" lengthAdjust="spacingAndGlyphs" stroke="#555" stroke-width="0.22">31500</text>
<text x="296.27" y="782.60" font-size="11" fill="#555" font-family='"Liberation Serif", serif' text-anchor="middle" textLength="32.40" lengthAdjust="spacingAndGlyphs" stroke="#555" stroke-width="0.22">32000</text>
<text x="339.18" y="782.60" font-size="11" fill="#555" font-family='"Liberation Serif", serif' text-anchor="middle" textLength="32.40" lengthAdjust="spacingAndGlyphs" stroke="#555" stroke-width="0.22">32500</text>
<rect x="115.40" y="681.10" width="1.5" height="88.60" fill="#ff2020"/>
<rect x="380.70" y="686.10" width="1.5" height="83.60" fill="#ff2020"/>
<path d="M113.30 679.70 H118.90 L116.10 685.90 Z" fill="#7fa6d8" stroke="#ff4040" stroke-width="0.7"/>
<path d="M113.30 771.30 H118.90 L116.10 764.90 Z" fill="#7fa6d8" stroke="#ff4040" stroke-width="0.7"/>
<path d="M378.70 771.30 H384.30 L381.50 764.90 Z" fill="#7fa6d8" stroke="#ff4040" stroke-width="0.7"/>
<rect x="597.19" y="682.10" width="1" height="86.60" fill="#e6e6e6"/>
<rect x="640.60" y="682.10" width="1" height="86.60" fill="#e6e6e6"/>
<rect x="684.00" y="682.10" width="1" height="86.60" fill="#e6e6e6"/>
<rect x="727.40" y="682.10" width="1" height="86.60" fill="#e6e6e6"/>
<rect x="770.80" y="682.10" width="1" height="86.60" fill="#e6e6e6"/>
<rect x="814.21" y="682.10" width="1" height="86.60" fill="#e6e6e6"/>
<rect x="589.10" y="745.76" width="268.40" height="1" fill="#e6e6e6"/>
<rect x="589.10" y="723.33" width="268.40" height="1" fill="#e6e6e6"/>
<rect x="589.10" y="700.89" width="268.40" height="1" fill="#e6e6e6"/>
<path d="M589.4 768.7 686.7 768.7 687.4 767.6 688.1 764.2 688.8 768.7 689.4 766.5 690.1 765.3 690.8 768.7 691.5 768.7 692.2 767.6 692.9 766.5 693.6 766.5 694.3 767.6 695.0 766.5 695.7 766.5 696.4 768.7 697.1 766.5 697.8 767.6 698.5 766.5 699.2 765.3 699.9 768.7 700.6 767.6 701.3 768.7 701.9 766.5 702.6 760.8 703.3 764.2 704.0 765.3 705.4 765.3 706.1 766.5 706.8 763.1 707.5 765.3 708.2 762.0 708.9 764.2 709.6 765.3 710.3 763.1 711.0 764.2 711.7 766.5 712.4 763.1 713.1 766.5 714.4 766.5 715.1 767.6 715.8 766.5 716.5 762.0 717.2 762.0 717.9 760.8 718.6 767.6 719.3 764.2 720.0 763.1 720.7 766.5 721.4 765.3 722.1 764.2 722.8 765.3 723.5 762.0 724.2 767.6 724.9 764.2 725.6 762.0 726.3 766.5 726.9 764.2 727.6 766.5 728.3 760.8 729.0 764.2 729.7 764.2 730.4 763.1 731.1 765.3 731.8 764.2 732.5 762.0 733.2 762.0 733.9 763.1 734.6 763.1 735.3 765.3 736.0 758.6 736.7 762.0 737.4 756.4 738.1 759.7 738.8 759.7 739.4 763.1 740.1 759.7 740.8 763.1 741.5 764.2 742.2 760.8 742.9 759.7 743.6 763.1 744.3 763.1 745.0 762.0 745.7 763.1 746.4 760.8 747.1 759.7 747.8 756.4 748.5 764.2 749.2 758.6 749.9 760.8 750.6 757.5 751.3 759.7 751.9 758.6 752.6 755.2 753.3 757.5 754.0 758.6 754.7 750.8 755.4 756.4 756.1 762.0 756.8 756.4 757.5 754.1 758.2 758.6 758.9 754.1 759.6 750.8 760.3 763.1 761.0 753.0 761.7 753.0 762.4 751.9 763.1 748.5 763.8 747.4 764.4 747.4 765.1 737.3 765.8 746.3 766.5 741.8 767.2 746.3 767.9 740.7 768.6 747.4 769.3 739.5 770.0 751.9 770.7 746.3 771.4 739.5 772.1 738.4 772.8 744.0 773.5 728.3 774.2 727.2 774.9 745.1 775.6 732.8 776.3 741.8 776.9 736.2 777.6 735.0 778.3 740.7 779.0 732.8 779.7 718.2 780.4 731.7 781.1 728.3 781.8 732.8 782.5 727.2 783.2 735.0 783.9 731.7 784.6 718.2 785.3 726.1 786.0 727.2 786.7 713.7 787.4 714.9 788.1 722.7 788.8 729.4 789.4 723.8 790.1 717.1 790.8 712.6 791.5 716.0 792.2 720.5 792.9 719.3 793.6 723.8 794.3 712.6 795.0 727.2 795.7 726.1 796.4 730.6 797.1 719.3 797.8 725.0 798.5 721.6 799.2 737.3 799.9 727.2 800.6 744.0 801.3 735.0 801.9 732.8 802.6 747.4 803.3 745.1 804.0 749.6 804.7 756.4 805.4 746.3 806.1 735.0 806.8 733.9 807.5 733.9 808.2 736.2 808.9 713.7 809.6 705.9 810.3 712.6 811.0 690.2 811.7 682.3 812.4 689.1 813.1 708.1 813.8 710.4 814.4 733.9 815.1 742.9 815.8 749.6 816.5 755.2 817.2 764.2 817.9 762.0 818.6 766.5 819.3 767.6 820.0 768.7 857.5 768.7" fill="none" stroke="#0000ff" stroke-width="1.1" stroke-linejoin="miter"/>
<rect x="766.00" y="690.60" width="13.2" height="11" fill="#fff" stroke="#cfcfcf" stroke-width="1"/>
<rect x="767.50" y="692.10" width="10.4" height="8.2" fill="#0000ff"/>
<text x="783.30" y="699.70" font-size="11" fill="#8a8a8a" font-family='"Liberation Serif", serif' textLength="67.00" lengthAdjust="spacingAndGlyphs" >aida14 1.8.L</text>
<path d="M589.10 682.10 H857.50 V768.70 H589.10 Z" fill="none" stroke="#858585" stroke-width="1.8"/>
<path d="M589.10 768.30 H856.50" stroke="#3c3cdc" stroke-width="1.6"/>
<text x="584.50" y="772.60" font-size="11" fill="#555" font-family='"Liberation Serif", serif' text-anchor="end" textLength="6.38" lengthAdjust="spacingAndGlyphs" stroke="#555" stroke-width="0.22">0</text>
<text x="584.50" y="750.16" font-size="11" fill="#555" font-family='"Liberation Serif", serif' text-anchor="end" textLength="12.76" lengthAdjust="spacingAndGlyphs" stroke="#555" stroke-width="0.22">20</text>
<text x="584.50" y="727.73" font-size="11" fill="#555" font-family='"Liberation Serif", serif' text-anchor="end" textLength="12.76" lengthAdjust="spacingAndGlyphs" stroke="#555" stroke-width="0.22">40</text>
<text x="584.50" y="705.29" font-size="11" fill="#555" font-family='"Liberation Serif", serif' text-anchor="end" textLength="12.76" lengthAdjust="spacingAndGlyphs" stroke="#555" stroke-width="0.22">60</text>
<text x="597.69" y="782.60" font-size="11" fill="#555" font-family='"Liberation Serif", serif' text-anchor="middle" textLength="32.40" lengthAdjust="spacingAndGlyphs" stroke="#555" stroke-width="0.22">30000</text>
<text x="641.10" y="782.60" font-size="11" fill="#555" font-family='"Liberation Serif", serif' text-anchor="middle" textLength="32.40" lengthAdjust="spacingAndGlyphs" stroke="#555" stroke-width="0.22">30500</text>
<text x="684.50" y="782.60" font-size="11" fill="#555" font-family='"Liberation Serif", serif' text-anchor="middle" textLength="32.40" lengthAdjust="spacingAndGlyphs" stroke="#555" stroke-width="0.22">31000</text>
<text x="727.90" y="782.60" font-size="11" fill="#555" font-family='"Liberation Serif", serif' text-anchor="middle" textLength="32.40" lengthAdjust="spacingAndGlyphs" stroke="#555" stroke-width="0.22">31500</text>
<text x="771.30" y="782.60" font-size="11" fill="#555" font-family='"Liberation Serif", serif' text-anchor="middle" textLength="32.40" lengthAdjust="spacingAndGlyphs" stroke="#555" stroke-width="0.22">32000</text>
<text x="814.71" y="782.60" font-size="11" fill="#555" font-family='"Liberation Serif", serif' text-anchor="middle" textLength="32.40" lengthAdjust="spacingAndGlyphs" stroke="#555" stroke-width="0.22">32500</text>
<rect x="588.40" y="681.10" width="1.5" height="88.60" fill="#ff2020"/>
<rect x="856.70" y="686.10" width="1.5" height="83.60" fill="#ff2020"/>
<path d="M586.30 679.70 H591.90 L589.10 685.90 Z" fill="#7fa6d8" stroke="#ff4040" stroke-width="0.7"/>
<path d="M586.30 771.30 H591.90 L589.10 764.90 Z" fill="#7fa6d8" stroke="#ff4040" stroke-width="0.7"/>
<path d="M854.70 771.30 H860.30 L857.50 764.90 Z" fill="#7fa6d8" stroke="#ff4040" stroke-width="0.7"/>
<rect x="1070.58" y="682.10" width="1" height="86.60" fill="#e6e6e6"/>
<rect x="1114.42" y="682.10" width="1" height="86.60" fill="#e6e6e6"/>
<rect x="1158.26" y="682.10" width="1" height="86.60" fill="#e6e6e6"/>
<rect x="1202.10" y="682.10" width="1" height="86.60" fill="#e6e6e6"/>
<rect x="1245.94" y="682.10" width="1" height="86.60" fill="#e6e6e6"/>
<rect x="1289.77" y="682.10" width="1" height="86.60" fill="#e6e6e6"/>
<rect x="1062.40" y="743.77" width="271.10" height="1" fill="#e6e6e6"/>
<rect x="1062.40" y="719.34" width="271.10" height="1" fill="#e6e6e6"/>
<rect x="1062.40" y="694.91" width="271.10" height="1" fill="#e6e6e6"/>
<path d="M1062.6 768.7 1224.2 768.7 1224.2 756.5 1224.6 756.5 1224.6 768.7 1228.9 768.7 1229.2 756.5 1229.6 756.5 1229.6 768.7 1231.2 768.7 1231.2 756.5 1231.2 768.7 1231.6 756.5 1231.6 768.7 1232.2 768.7 1232.2 756.5 1232.6 756.5 1232.6 768.7 1232.6 756.5 1232.9 756.5 1232.9 768.7 1233.2 756.5 1233.2 768.7 1233.2 756.5 1233.6 768.7 1233.6 756.5 1233.6 768.7 1233.9 768.7 1234.2 756.5 1234.2 768.7 1234.6 756.5 1234.6 768.7 1235.2 768.7 1235.2 756.5 1235.2 768.7 1235.6 768.7 1235.6 756.5 1235.9 768.7 1237.2 768.7 1237.6 756.5 1237.6 768.7 1237.9 756.5 1237.9 768.7 1238.2 768.7 1238.2 756.5 1238.2 768.7 1238.6 768.7 1238.6 756.5 1238.6 768.7 1238.9 768.7 1238.9 756.5 1239.2 768.7 1239.6 756.5 1239.6 768.7 1239.9 768.7 1239.9 756.5 1240.2 768.7 1240.2 756.5 1240.2 768.7 1240.6 768.7 1240.6 756.5 1240.6 768.7 1241.6 768.7 1241.6 756.5 1241.6 768.7 1241.9 768.7 1241.9 756.5 1241.9 768.7 1242.9 768.7 1242.9 756.5 1243.2 768.7 1243.2 744.3 1243.2 756.5 1243.6 756.5 1243.6 744.3 1243.6 756.5 1243.9 756.5 1243.9 744.3 1244.2 744.3 1244.2 756.5 1244.6 744.3 1244.6 756.5 1244.9 744.3 1244.9 756.5 1245.2 756.5 1245.2 744.3 1245.2 756.5 1245.6 744.3 1245.6 768.7 1245.6 756.5 1245.9 768.7 1246.6 768.7 1246.9 756.5 1246.9 768.7 1247.2 768.7 1247.2 756.5 1247.2 768.7 1247.9 768.7 1247.9 744.3 1247.9 756.5 1248.2 768.7 1248.2 756.5 1248.2 768.7 1248.6 768.7 1248.9 756.5 1248.9 768.7 1248.9 756.5 1249.2 768.7 1249.2 756.5 1249.6 768.7 1249.6 756.5 1249.6 768.7 1249.9 756.5 1249.9 768.7 1250.6 768.7 1250.6 756.5 1250.9 756.5 1250.9 768.7 1250.9 756.5 1251.2 756.5 1251.2 768.7 1251.9 768.7 1251.9 744.3 1251.9 756.5 1252.2 756.5 1252.2 744.3 1252.2 756.5 1252.6 756.5 1252.6 744.3 1252.6 756.5 1252.9 744.3 1252.9 756.5 1253.2 756.5 1253.2 744.3 1253.6 744.3 1253.6 756.5 1253.9 756.5 1253.9 744.3 1254.2 756.5 1254.2 744.3 1254.2 756.5 1254.6 756.5 1254.9 744.3 1254.9 756.5 1255.6 756.5 1255.6 744.3 1255.6 768.7 1255.9 768.7 1255.9 756.5 1256.2 768.7 1257.2 768.7 1257.2 756.5 1257.2 768.7 1257.6 768.7 1257.6 744.3 1257.6 768.7 1258.2 768.7 1258.2 756.5 1258.6 768.7 1258.6 756.5 1258.9 768.7 1258.9 756.5 1258.9 768.7 1259.2 768.7 1259.2 744.3 1259.2 756.5 1259.6 768.7 1259.9 768.7 1259.9 744.3 1259.9 756.5 1260.2 768.7 1260.6 768.7 1260.9 744.3 1260.9 768.7 1261.2 768.7 1261.2 744.3 1261.2 768.7 1261.6 768.7 1261.6 744.3 1261.6 756.5 1261.9 768.7 1261.9 756.5 1261.9 768.7 1262.2 768.7 1262.2 744.3 1262.6 756.5 1262.6 744.3 1262.6 756.5 1262.9 744.3 1262.9 756.5 1263.2 744.3 1263.6 744.3 1263.6 756.5 1263.9 744.3 1264.2 744.3 1264.2 756.5 1264.6 744.3 1264.6 756.5 1264.9 744.3 1264.9 756.5 1264.9 744.3 1265.2 756.5 1265.2 744.3 1265.6 756.5 1265.6 744.3 1265.9 744.3 1265.9 756.5 1266.2 756.5 1266.2 744.3 1266.6 756.5 1266.6 744.3 1266.9 756.5 1266.9 744.3 1267.2 744.3 1267.2 732.1 1267.2 744.3 1267.6 744.3 1267.6 732.1 1267.6 744.3 1267.9 732.1 1268.2 744.3 1268.2 732.1 1268.6 744.3 1268.6 732.1 1268.6 756.5 1268.9 756.5 1268.9 744.3 1268.9 756.5 1269.2 744.3 1269.2 756.5 1269.6 744.3 1269.6 756.5 1269.9 744.3 1269.9 756.5 1270.2 744.3 1270.2 732.1 1270.2 756.5 1270.6 732.1 1270.6 756.5 1270.9 732.1 1270.9 756.5 1271.2 732.1 1271.2 744.3 1271.6 744.3 1271.6 732.1 1271.9 744.3 1271.9 732.1 1272.2 732.1 1272.2 756.5 1272.6 744.3 1272.6 732.1 1272.6 756.5 1272.9 744.3 1272.9 732.1 1273.2 744.3 1273.2 732.1 1273.2 756.5 1273.6 744.3 1273.6 732.1 1273.6 756.5 1273.6 744.3 1273.9 744.3 1273.9 732.1 1274.2 744.3 1274.2 719.8 1274.2 732.1 1274.6 744.3 1274.6 756.5 1274.9 756.5 1274.9 732.1 1275.2 744.3 1275.6 744.3 1275.6 683.2 1275.6 756.5 1275.9 756.5 1275.9 732.1 1276.2 732.1 1276.2 756.5 1276.2 744.3 1276.6 744.3 1276.6 768.7 1276.9 756.5 1276.9 744.3 1276.9 768.7 1277.2 768.7 1277.2 744.3 1277.6 768.7 1278.2 768.7 1278.2 744.3 1278.2 768.7 1278.6 756.5 1278.6 768.7 1279.2 768.7 1279.2 744.3 1279.6 768.7 1279.9 744.3 1279.9 768.7 1279.9 756.5 1280.2 768.7 1280.2 719.8 1280.2 768.7 1280.6 768.7 1280.9 744.3 1280.9 768.7 1281.2 768.7 1281.6 756.5 1281.6 768.7 1281.9 768.7 1281.9 756.5 1281.9 768.7 1282.2 768.7 1282.6 756.5 1282.6 768.7 1282.6 744.3 1282.9 768.7 1282.9 719.8 1283.2 732.1 1283.6 732.1 1283.9 744.3 1283.9 732.1 1284.2 732.1 1284.2 719.8 1284.2 744.3 1284.6 744.3 1284.6 732.1 1285.2 732.1 1285.2 744.3 1285.2 695.4 1285.6 732.1 1285.9 732.1 1285.9 744.3 1285.9 732.1 1286.9 732.1 1286.9 744.3 1287.2 732.1 1287.6 744.3 1287.6 732.1 1287.9 732.1 1287.9 744.3 1287.9 719.8 1288.2 732.1 1288.2 744.3 1288.6 744.3 1288.6 732.1 1288.9 732.1 1289.2 744.3 1289.2 732.1 1289.2 744.3 1289.6 768.7 1290.2 768.7 1290.2 756.5 1290.2 768.7 1291.2 768.7 1291.6 756.5 1291.6 768.7 1291.9 768.7 1291.9 756.5 1291.9 768.7 1333.6 768.7" fill="none" stroke="#0000ff" stroke-width="1.1" stroke-linejoin="miter"/>
<rect x="1242.00" y="690.60" width="13.2" height="11" fill="#fff" stroke="#cfcfcf" stroke-width="1"/>
<rect x="1243.50" y="692.10" width="10.4" height="8.2" fill="#0000ff"/>
<text x="1259.30" y="699.70" font-size="11" fill="#8a8a8a" font-family='"Liberation Serif", serif' textLength="67.00" lengthAdjust="spacingAndGlyphs" >aida13 1.8.L</text>
<path d="M1062.40 682.10 H1333.50 V768.70 H1062.40 Z" fill="none" stroke="#858585" stroke-width="1.8"/>
<path d="M1062.40 768.30 H1332.50" stroke="#3c3cdc" stroke-width="1.6"/>
<text x="1057.80" y="772.60" font-size="11" fill="#555" font-family='"Liberation Serif", serif' text-anchor="end" textLength="6.38" lengthAdjust="spacingAndGlyphs" stroke="#555" stroke-width="0.22">0</text>
<text x="1057.80" y="748.17" font-size="11" fill="#555" font-family='"Liberation Serif", serif' text-anchor="end" textLength="6.38" lengthAdjust="spacingAndGlyphs" stroke="#555" stroke-width="0.22">2</text>
<text x="1057.80" y="723.74" font-size="11" fill="#555" font-family='"Liberation Serif", serif' text-anchor="end" textLength="6.38" lengthAdjust="spacingAndGlyphs" stroke="#555" stroke-width="0.22">4</text>
<text x="1057.80" y="699.31" font-size="11" fill="#555" font-family='"Liberation Serif", serif' text-anchor="end" textLength="6.38" lengthAdjust="spacingAndGlyphs" stroke="#555" stroke-width="0.22">6</text>
<text x="1071.08" y="782.60" font-size="11" fill="#555" font-family='"Liberation Serif", serif' text-anchor="middle" textLength="32.40" lengthAdjust="spacingAndGlyphs" stroke="#555" stroke-width="0.22">30000</text>
<text x="1114.92" y="782.60" font-size="11" fill="#555" font-family='"Liberation Serif", serif' text-anchor="middle" textLength="32.40" lengthAdjust="spacingAndGlyphs" stroke="#555" stroke-width="0.22">30500</text>
<text x="1158.76" y="782.60" font-size="11" fill="#555" font-family='"Liberation Serif", serif' text-anchor="middle" textLength="32.40" lengthAdjust="spacingAndGlyphs" stroke="#555" stroke-width="0.22">31000</text>
<text x="1202.60" y="782.60" font-size="11" fill="#555" font-family='"Liberation Serif", serif' text-anchor="middle" textLength="32.40" lengthAdjust="spacingAndGlyphs" stroke="#555" stroke-width="0.22">31500</text>
<text x="1246.44" y="782.60" font-size="11" fill="#555" font-family='"Liberation Serif", serif' text-anchor="middle" textLength="32.40" lengthAdjust="spacingAndGlyphs" stroke="#555" stroke-width="0.22">32000</text>
<text x="1290.27" y="782.60" font-size="11" fill="#555" font-family='"Liberation Serif", serif' text-anchor="middle" textLength="32.40" lengthAdjust="spacingAndGlyphs" stroke="#555" stroke-width="0.22">32500</text>
<rect x="1061.70" y="681.10" width="1.5" height="88.60" fill="#ff2020"/>
<rect x="1332.70" y="686.10" width="1.5" height="83.60" fill="#ff2020"/>
<path d="M1059.60 679.70 H1065.20 L1062.40 685.90 Z" fill="#7fa6d8" stroke="#ff4040" stroke-width="0.7"/>
<path d="M1059.60 771.30 H1065.20 L1062.40 764.90 Z" fill="#7fa6d8" stroke="#ff4040" stroke-width="0.7"/>
<path d="M1330.70 771.30 H1336.30 L1333.50 764.90 Z" fill="#7fa6d8" stroke="#ff4040" stroke-width="0.7"/>
<rect x="121.19" y="804.10" width="1" height="86.60" fill="#e6e6e6"/>
<rect x="164.60" y="804.10" width="1" height="86.60" fill="#e6e6e6"/>
<rect x="208.00" y="804.10" width="1" height="86.60" fill="#e6e6e6"/>
<rect x="251.40" y="804.10" width="1" height="86.60" fill="#e6e6e6"/>
<rect x="294.80" y="804.10" width="1" height="86.60" fill="#e6e6e6"/>
<rect x="338.21" y="804.10" width="1" height="86.60" fill="#e6e6e6"/>
<rect x="113.10" y="862.13" width="268.40" height="1" fill="#e6e6e6"/>
<rect x="113.10" y="834.06" width="268.40" height="1" fill="#e6e6e6"/>
<rect x="113.10" y="805.99" width="268.40" height="1" fill="#e6e6e6"/>
<path d="M113.4 890.7 283.6 890.7 284.3 887.9 285.0 890.7 285.7 887.9 286.4 887.9 287.1 890.7 287.8 890.7 288.4 887.9 289.1 890.7 289.8 885.1 290.5 887.9 291.2 887.9 291.9 882.3 292.6 887.9 293.3 890.7 294.0 885.1 294.7 885.1 295.4 890.7 296.1 882.3 296.8 890.7 297.5 885.1 298.2 882.3 298.9 882.3 299.6 873.9 300.3 876.7 300.9 887.9 301.6 876.7 302.3 890.7 303.0 885.1 303.7 887.9 304.4 885.1 305.1 885.1 305.8 890.7 306.5 890.7 307.2 885.1 307.9 890.7 308.6 885.1 309.3 887.9 310.0 885.1 310.7 887.9 311.4 879.5 312.1 890.7 312.8 882.3 313.4 882.3 314.1 885.1 314.8 873.9 315.5 876.7 316.2 879.5 316.9 882.3 317.6 876.7 318.3 887.9 319.0 876.7 319.7 879.5 320.4 879.5 321.1 887.9 321.8 885.1 322.5 887.9 323.2 885.1 323.9 882.3 324.6 882.3 325.3 876.7 325.9 882.3 326.6 876.7 327.3 859.8 328.0 879.5 328.7 871.1 329.4 879.5 330.1 885.1 330.8 876.7 331.5 868.2 332.2 882.3 332.9 876.7 333.6 868.2 334.3 873.9 336.4 873.9 337.1 865.4 337.8 868.2 338.4 865.4 339.1 876.7 339.8 882.3 340.5 854.2 341.2 873.9 341.9 854.2 342.6 854.2 343.3 862.6 344.0 868.2 344.7 862.6 345.4 868.2 346.1 876.7 346.8 865.4 347.5 873.9 348.2 854.2 348.9 828.9 349.6 809.3 350.3 843.0 350.9 865.4 351.6 862.6 352.3 871.1 353.0 865.4 353.7 862.6 354.4 848.6 355.1 854.2 355.8 845.8 356.5 845.8 357.2 820.5 357.9 826.1 358.6 831.8 359.3 843.0 360.0 879.5 360.7 857.0 361.4 876.7 362.1 882.3 362.8 890.7 363.4 885.1 364.1 890.7 381.5 890.7" fill="none" stroke="#0000ff" stroke-width="1.1" stroke-linejoin="miter"/>
<rect x="290.00" y="812.60" width="13.2" height="11" fill="#fff" stroke="#cfcfcf" stroke-width="1"/>
<rect x="291.50" y="814.10" width="10.4" height="8.2" fill="#0000ff"/>
<text x="307.30" y="821.70" font-size="11" fill="#8a8a8a" font-family='"Liberation Serif", serif' textLength="67.00" lengthAdjust="spacingAndGlyphs" >aida11 1.8.L</text>
<path d="M113.10 804.10 H381.50 V890.70 H113.10 Z" fill="none" stroke="#858585" stroke-width="1.8"/>
<path d="M113.10 890.30 H380.50" stroke="#3c3cdc" stroke-width="1.6"/>
<text x="108.50" y="894.60" font-size="11" fill="#555" font-family='"Liberation Serif", serif' text-anchor="end" textLength="6.38" lengthAdjust="spacingAndGlyphs" stroke="#555" stroke-width="0.22">0</text>
<text x="108.50" y="866.53" font-size="11" fill="#555" font-family='"Liberation Serif", serif' text-anchor="end" textLength="12.76" lengthAdjust="spacingAndGlyphs" stroke="#555" stroke-width="0.22">10</text>
<text x="108.50" y="838.46" font-size="11" fill="#555" font-family='"Liberation Serif", serif' text-anchor="end" textLength="12.76" lengthAdjust="spacingAndGlyphs" stroke="#555" stroke-width="0.22">20</text>
<text x="108.50" y="810.39" font-size="11" fill="#555" font-family='"Liberation Serif", serif' text-anchor="end" textLength="12.76" lengthAdjust="spacingAndGlyphs" stroke="#555" stroke-width="0.22">30</text>
<text x="121.69" y="904.60" font-size="11" fill="#555" font-family='"Liberation Serif", serif' text-anchor="middle" textLength="32.40" lengthAdjust="spacingAndGlyphs" stroke="#555" stroke-width="0.22">30000</text>
<text x="165.10" y="904.60" font-size="11" fill="#555" font-family='"Liberation Serif", serif' text-anchor="middle" textLength="32.40" lengthAdjust="spacingAndGlyphs" stroke="#555" stroke-width="0.22">30500</text>
<text x="208.50" y="904.60" font-size="11" fill="#555" font-family='"Liberation Serif", serif' text-anchor="middle" textLength="32.40" lengthAdjust="spacingAndGlyphs" stroke="#555" stroke-width="0.22">31000</text>
<text x="251.90" y="904.60" font-size="11" fill="#555" font-family='"Liberation Serif", serif' text-anchor="middle" textLength="32.40" lengthAdjust="spacingAndGlyphs" stroke="#555" stroke-width="0.22">31500</text>
<text x="295.30" y="904.60" font-size="11" fill="#555" font-family='"Liberation Serif", serif' text-anchor="middle" textLength="32.40" lengthAdjust="spacingAndGlyphs" stroke="#555" stroke-width="0.22">32000</text>
<text x="338.71" y="904.60" font-size="11" fill="#555" font-family='"Liberation Serif", serif' text-anchor="middle" textLength="32.40" lengthAdjust="spacingAndGlyphs" stroke="#555" stroke-width="0.22">32500</text>
<rect x="112.40" y="803.10" width="1.5" height="88.60" fill="#ff2020"/>
<rect x="380.70" y="808.10" width="1.5" height="83.60" fill="#ff2020"/>
<path d="M110.30 801.70 H115.90 L113.10 807.90 Z" fill="#7fa6d8" stroke="#ff4040" stroke-width="0.7"/>
<path d="M110.30 893.30 H115.90 L113.10 886.90 Z" fill="#7fa6d8" stroke="#ff4040" stroke-width="0.7"/>
<path d="M378.70 893.30 H384.30 L381.50 886.90 Z" fill="#7fa6d8" stroke="#ff4040" stroke-width="0.7"/>
<rect x="609.87" y="804.10" width="1" height="86.60" fill="#c8c8c8"/>
<rect x="651.16" y="804.10" width="1" height="86.60" fill="#c8c8c8"/>
<rect x="692.44" y="804.10" width="1" height="86.60" fill="#c8c8c8"/>
<rect x="733.73" y="804.10" width="1" height="86.60" fill="#c8c8c8"/>
<rect x="775.01" y="804.10" width="1" height="86.60" fill="#c8c8c8"/>
<rect x="816.29" y="804.10" width="1" height="86.60" fill="#c8c8c8"/>
<rect x="602.20" y="864.77" width="255.30" height="1" fill="#c8c8c8"/>
<rect x="602.20" y="839.35" width="255.30" height="1" fill="#c8c8c8"/>
<rect x="602.20" y="813.92" width="255.30" height="1" fill="#c8c8c8"/>
<path d="M602.5 890.7 720.8 890.7 721.4 890.2 722.1 889.8 722.7 889.1 723.4 888.9 724.1 889.3 724.7 888.0 725.4 886.8 726.1 886.9 726.7 885.7 727.4 884.6 728.0 883.2 728.7 884.1 729.4 882.9 730.0 881.8 730.7 880.8 731.3 881.6 732.0 879.1 732.7 880.6 733.3 878.9 734.0 879.5 734.6 878.7 735.3 877.4 736.0 877.8 736.6 878.0 737.3 878.7 737.9 878.2 738.6 878.6 739.3 875.6 739.9 878.4 740.6 879.1 741.2 875.3 741.9 875.4 742.6 876.6 743.2 875.4 743.9 876.6 744.5 876.2 745.2 875.1 745.9 875.0 746.5 875.6 747.2 873.8 747.8 874.5 748.5 874.9 749.2 876.1 749.8 874.8 750.5 875.1 751.2 874.9 751.8 874.0 752.5 875.2 753.1 874.4 753.8 873.8 754.5 874.2 755.1 872.3 755.8 876.0 756.4 874.4 757.1 875.3 757.8 874.3 758.4 871.9 759.1 875.6 759.7 874.3 760.4 873.4 761.1 873.9 761.7 873.1 762.4 875.3 763.0 873.0 763.7 874.6 764.4 874.8 765.0 873.2 765.7 873.2 766.3 874.3 767.0 874.3 767.7 873.7 768.3 873.5 769.0 873.1 769.6 873.3 770.3 874.1 771.0 870.0 771.6 870.6 772.3 871.4 773.0 871.2 773.6 869.8 774.3 868.9 774.9 870.1 775.6 865.6 776.3 866.0 776.9 866.2 777.6 864.8 778.2 864.3 778.9 862.7 779.6 863.1 780.2 861.2 780.9 860.3 781.5 861.9 782.2 861.5 782.9 861.5 783.5 860.0 784.2 860.1 784.8 858.6 785.5 857.6 786.2 856.7 786.8 858.3 787.5 854.7 788.1 855.9 788.8 854.7 789.5 854.4 790.1 855.6 790.8 851.5 791.4 853.5 792.1 848.4 792.8 849.1 793.4 846.5 794.1 847.3 794.7 846.7 795.4 845.2 796.1 846.9 796.7 844.0 797.4 846.1 798.1 845.0 798.7 846.0 799.4 843.1 800.0 840.5 800.7 840.0 801.4 838.8 802.0 834.4 802.7 831.6 803.3 830.6 804.0 830.1 804.7 827.7 805.3 824.9 806.0 827.1 806.6 820.9 807.3 814.7 808.0 817.5 808.6 814.7 809.3 821.7 809.9 834.1 810.6 838.6 811.3 845.1 811.9 851.7 812.6 850.7 813.2 859.1 813.9 864.0 814.6 867.4 815.2 873.2 815.9 878.7 816.5 882.4 817.2 883.9 817.9 886.1 818.5 888.5 819.2 889.3 819.8 890.1 820.5 890.5 821.2 890.7 857.5 890.7" fill="none" stroke="#0000ff" stroke-width="1.1" stroke-linejoin="miter"/>
<rect x="766.00" y="812.60" width="13.2" height="11" fill="#fff" stroke="#cfcfcf" stroke-width="1"/>
<rect x="767.50" y="814.10" width="10.4" height="8.2" fill="#0000ff"/>
<text x="783.30" y="821.70" font-size="11" fill="#000" font-family='"Liberation Serif", serif' textLength="67.00" lengthAdjust="spacingAndGlyphs" >aida07 1.8.L</text>
<rect x="602.20" y="804.10" width="255.30" height="86.60" fill="none" stroke="#000" stroke-width="2.2"/>
<path d="M602.20 890.40 H857.50" stroke="#00008a" stroke-width="1.2"/>
<text x="597.60" y="894.60" font-size="11" fill="#555" font-family='"Liberation Serif", serif' text-anchor="end" textLength="6.38" lengthAdjust="spacingAndGlyphs" stroke="#555" stroke-width="0.22">0</text>
<text x="597.60" y="869.17" font-size="11" fill="#555" font-family='"Liberation Serif", serif' text-anchor="end" textLength="19.14" lengthAdjust="spacingAndGlyphs" stroke="#555" stroke-width="0.22">500</text>
<text x="597.60" y="843.75" font-size="11" fill="#555" font-family='"Liberation Serif", serif' text-anchor="end" textLength="25.52" lengthAdjust="spacingAndGlyphs" stroke="#555" stroke-width="0.22">1000</text>
<text x="597.60" y="818.32" font-size="11" fill="#555" font-family='"Liberation Serif", serif' text-anchor="end" textLength="25.52" lengthAdjust="spacingAndGlyphs" stroke="#555" stroke-width="0.22">1500</text>
<text x="610.37" y="904.60" font-size="11" fill="#555" font-family='"Liberation Serif", serif' text-anchor="middle" textLength="32.40" lengthAdjust="spacingAndGlyphs" stroke="#555" stroke-width="0.22">30000</text>
<text x="651.66" y="904.60" font-size="11" fill="#555" font-family='"Liberation Serif", serif' text-anchor="middle" textLength="32.40" lengthAdjust="spacingAndGlyphs" stroke="#555" stroke-width="0.22">30500</text>
<text x="692.94" y="904.60" font-size="11" fill="#555" font-family='"Liberation Serif", serif' text-anchor="middle" textLength="32.40" lengthAdjust="spacingAndGlyphs" stroke="#555" stroke-width="0.22">31000</text>
<text x="734.23" y="904.60" font-size="11" fill="#555" font-family='"Liberation Serif", serif' text-anchor="middle" textLength="32.40" lengthAdjust="spacingAndGlyphs" stroke="#555" stroke-width="0.22">31500</text>
<text x="775.51" y="904.60" font-size="11" fill="#555" font-family='"Liberation Serif", serif' text-anchor="middle" textLength="32.40" lengthAdjust="spacingAndGlyphs" stroke="#555" stroke-width="0.22">32000</text>
<text x="816.79" y="904.60" font-size="11" fill="#555" font-family='"Liberation Serif", serif' text-anchor="middle" textLength="32.40" lengthAdjust="spacingAndGlyphs" stroke="#555" stroke-width="0.22">32500</text>
<rect x="1092.46" y="804.10" width="1" height="86.60" fill="#e6e6e6"/>
<rect x="1132.64" y="804.10" width="1" height="86.60" fill="#e6e6e6"/>
<rect x="1172.83" y="804.10" width="1" height="86.60" fill="#e6e6e6"/>
<rect x="1213.01" y="804.10" width="1" height="86.60" fill="#e6e6e6"/>
<rect x="1253.19" y="804.10" width="1" height="86.60" fill="#e6e6e6"/>
<rect x="1293.38" y="804.10" width="1" height="86.60" fill="#e6e6e6"/>
<rect x="1085.00" y="859.87" width="248.50" height="1" fill="#e6e6e6"/>
<rect x="1085.00" y="829.54" width="248.50" height="1" fill="#e6e6e6"/>
<path d="M1085.3 890.7 1167.0 890.7 1167.6 890.6 1168.9 890.6 1170.2 890.6 1170.8 890.6 1172.8 890.6 1173.4 890.5 1175.3 890.6 1176.0 890.5 1176.6 890.5 1177.9 890.5 1178.5 890.4 1179.2 890.5 1179.8 890.4 1181.1 890.4 1181.8 890.2 1183.0 890.2 1183.7 890.2 1184.3 890.1 1185.0 890.0 1185.6 889.9 1186.3 890.0 1186.9 889.9 1188.2 889.9 1188.8 889.7 1189.5 889.8 1190.1 889.8 1190.8 889.6 1191.4 889.6 1192.1 889.5 1192.7 889.4 1193.3 889.4 1194.0 889.4 1194.6 889.2 1195.3 889.4 1195.9 889.1 1196.6 889.2 1197.2 889.1 1197.8 889.1 1198.5 888.9 1199.1 888.7 1199.8 888.6 1200.4 888.2 1201.1 887.9 1201.7 887.7 1202.3 887.0 1203.0 887.0 1203.6 886.9 1204.3 886.4 1204.9 886.2 1205.6 886.1 1206.2 885.6 1206.8 885.2 1207.5 884.1 1208.1 883.3 1208.8 883.0 1209.4 882.5 1210.1 882.1 1210.7 881.3 1211.3 880.4 1212.0 879.9 1212.6 879.0 1213.3 878.3 1213.9 877.2 1214.6 876.4 1215.2 875.3 1215.8 874.5 1216.5 873.6 1217.1 872.9 1217.8 870.9 1218.4 869.4 1219.1 867.3 1219.7 865.4 1220.3 863.3 1221.0 862.3 1221.6 860.3 1222.3 857.8 1222.9 855.9 1223.6 853.1 1224.2 850.8 1224.8 848.8 1225.5 845.3 1226.1 844.0 1226.8 841.5 1227.4 840.6 1228.1 837.0 1228.7 835.2 1229.3 833.2 1230.0 832.5 1230.6 829.9 1231.3 828.9 1231.9 826.9 1232.6 825.8 1233.2 824.7 1233.8 823.4 1234.5 821.3 1235.1 820.3 1235.8 821.1 1236.4 819.2 1237.1 817.5 1237.7 817.3 1238.3 816.3 1239.0 816.2 1239.6 814.3 1240.3 814.3 1240.9 814.4 1241.6 813.0 1242.2 813.4 1242.8 812.5 1243.5 813.8 1244.1 814.4 1244.8 812.7 1245.4 813.2 1246.1 814.4 1246.7 815.8 1247.3 813.1 1248.0 813.2 1248.6 813.7 1249.3 813.5 1249.9 813.1 1250.6 814.1 1251.2 812.3 1251.8 814.1 1252.5 813.2 1253.1 813.2 1253.8 813.5 1254.4 815.5 1255.1 816.9 1255.7 820.9 1256.3 824.4 1257.0 828.3 1257.6 834.6 1258.3 839.8 1258.9 843.7 1259.6 849.1 1260.2 852.1 1260.8 856.4 1261.5 860.1 1262.1 863.3 1262.8 865.9 1263.4 869.3 1264.1 872.8 1264.7 873.1 1265.3 874.6 1266.0 874.6 1266.6 876.0 1267.3 876.9 1267.9 877.6 1268.6 877.8 1269.2 878.9 1269.8 879.7 1270.5 880.9 1271.1 881.2 1271.8 882.0 1272.4 882.8 1273.1 883.6 1273.7 884.5 1274.3 884.7 1275.0 885.3 1275.6 885.2 1276.3 885.4 1276.9 885.7 1277.6 885.9 1278.2 886.0 1278.8 886.4 1279.5 886.5 1280.1 886.7 1280.8 886.9 1281.4 887.2 1282.1 887.6 1282.7 887.4 1283.3 887.7 1284.0 887.5 1284.6 887.6 1285.3 887.9 1285.9 888.0 1286.6 888.4 1287.2 888.3 1287.9 888.5 1288.5 888.3 1289.1 888.8 1289.8 888.6 1290.4 889.0 1291.1 889.3 1291.7 889.0 1292.4 889.2 1293.6 889.3 1294.3 889.6 1296.2 889.6 1296.9 889.8 1297.5 889.9 1298.1 890.1 1298.8 890.0 1299.4 890.2 1300.1 890.2 1301.4 890.3 1302.0 890.4 1302.6 890.3 1303.3 890.4 1305.2 890.4 1305.9 890.5 1306.5 890.5 1307.1 890.6 1307.8 890.6 1308.4 890.7 1333.5 890.7" fill="none" stroke="#0000ff" stroke-width="1.1" stroke-linejoin="miter"/>
<rect x="1242.00" y="812.60" width="13.2" height="11" fill="#fff" stroke="#cfcfcf" stroke-width="1"/>
<rect x="1243.50" y="814.10" width="10.4" height="8.2" fill="#0000ff"/>
<text x="1259.30" y="821.70" font-size="11" fill="#8a8a8a" font-family='"Liberation Serif", serif' textLength="67.00" lengthAdjust="spacingAndGlyphs" >aida16 1.8.L</text>
<path d="M1085.00 804.10 H1333.50 V890.70 H1085.00 Z" fill="none" stroke="#858585" stroke-width="1.8"/>
<path d="M1085.00 890.30 H1332.50" stroke="#3c3cdc" stroke-width="1.6"/>
<text x="1080.40" y="894.60" font-size="11" fill="#555" font-family='"Liberation Serif", serif' text-anchor="end" textLength="6.38" lengthAdjust="spacingAndGlyphs" stroke="#555" stroke-width="0.22">0</text>
<text x="1080.40" y="864.27" font-size="11" fill="#555" font-family='"Liberation Serif", serif' text-anchor="end" textLength="25.52" lengthAdjust="spacingAndGlyphs" stroke="#555" stroke-width="0.22">5000</text>
<text x="1080.40" y="833.94" font-size="11" fill="#555" font-family='"Liberation Serif", serif' text-anchor="end" textLength="31.90" lengthAdjust="spacingAndGlyphs" stroke="#555" stroke-width="0.22">10000</text>
<text x="1092.96" y="904.60" font-size="11" fill="#555" font-family='"Liberation Serif", serif' text-anchor="middle" textLength="32.40" lengthAdjust="spacingAndGlyphs" stroke="#555" stroke-width="0.22">30000</text>
<text x="1133.14" y="904.60" font-size="11" fill="#555" font-family='"Liberation Serif", serif' text-anchor="middle" textLength="32.40" lengthAdjust="spacingAndGlyphs" stroke="#555" stroke-width="0.22">30500</text>
<text x="1173.33" y="904.60" font-size="11" fill="#555" font-family='"Liberation Serif", serif' text-anchor="middle" textLength="32.40" lengthAdjust="spacingAndGlyphs" stroke="#555" stroke-width="0.22">31000</text>
<text x="1213.51" y="904.60" font-size="11" fill="#555" font-family='"Liberation Serif", serif' text-anchor="middle" textLength="32.40" lengthAdjust="spacingAndGlyphs" stroke="#555" stroke-width="0.22">31500</text>
<text x="1253.69" y="904.60" font-size="11" fill="#555" font-family='"Liberation Serif", serif' text-anchor="middle" textLength="32.40" lengthAdjust="spacingAndGlyphs" stroke="#555" stroke-width="0.22">32000</text>
<text x="1293.88" y="904.60" font-size="11" fill="#555" font-family='"Liberation Serif", serif' text-anchor="middle" textLength="32.40" lengthAdjust="spacingAndGlyphs" stroke="#555" stroke-width="0.22">32500</text>
<rect x="1084.30" y="803.10" width="1.5" height="88.60" fill="#ff2020"/>
<rect x="1332.70" y="808.10" width="1.5" height="83.60" fill="#ff2020"/>
<path d="M1082.20 801.70 H1087.80 L1085.00 807.90 Z" fill="#7fa6d8" stroke="#ff4040" stroke-width="0.7"/>
<path d="M1082.20 893.30 H1087.80 L1085.00 886.90 Z" fill="#7fa6d8" stroke="#ff4040" stroke-width="0.7"/>
<path d="M1330.70 893.30 H1336.30 L1333.50 886.90 Z" fill="#7fa6d8" stroke="#ff4040" stroke-width="0.7"/>
<text x="598.00" y="548.70" font-size="11" fill="#ff0000" font-family='"Liberation Serif", serif' textLength="51.50" lengthAdjust="spacingAndGlyphs" stroke="#ff0000" stroke-width="0.2">29901 (0)</text>
<text x="876.00" y="562.00" font-size="11" fill="#ff0000" font-family='"Liberation Serif", serif' text-anchor="middle" textLength="32.80" lengthAdjust="spacingAndGlyphs" stroke="#ff0000" stroke-width="0.2">32993</text>
<text x="876.00" y="574.50" font-size="11" fill="#ff0000" font-family='"Liberation Serif", serif' text-anchor="middle" textLength="14.50" lengthAdjust="spacingAndGlyphs" stroke="#ff0000" stroke-width="0.2">(0)</text>
<text x="118.70" y="581.00" font-size="11" fill="#ff0000" font-family='"Liberation Serif", serif' textLength="51.50" lengthAdjust="spacingAndGlyphs" stroke="#ff0000" stroke-width="0.2">29901 (0)</text>
<text x="1071.30" y="580.80" font-size="11" fill="#ff0000" font-family='"Liberation Serif", serif' textLength="51.50" lengthAdjust="spacingAndGlyphs" stroke="#ff0000" stroke-width="0.2">29901 (0)</text>
<text x="118.70" y="702.80" font-size="11" fill="#ff0000" font-family='"Liberation Serif", serif' textLength="51.50" lengthAdjust="spacingAndGlyphs" stroke="#ff0000" stroke-width="0.2">29901 (0)</text>
<text x="598.00" y="702.60" font-size="11" fill="#ff0000" font-family='"Liberation Serif", serif' textLength="51.50" lengthAdjust="spacingAndGlyphs" stroke="#ff0000" stroke-width="0.2">29901 (0)</text>
<text x="1071.40" y="702.60" font-size="11" fill="#ff0000" font-family='"Liberation Serif", serif' textLength="51.50" lengthAdjust="spacingAndGlyphs" stroke="#ff0000" stroke-width="0.2">29901 (0)</text>
<text x="118.70" y="824.70" font-size="11" fill="#ff0000" font-family='"Liberation Serif", serif' textLength="51.50" lengthAdjust="spacingAndGlyphs" stroke="#ff0000" stroke-width="0.2">29901 (0)</text>
<text x="592.00" y="824.70" font-size="11" fill="#ff0000" font-family='"Liberation Serif", serif' textLength="51.50" lengthAdjust="spacingAndGlyphs" stroke="#ff0000" stroke-width="0.2">29901 (0)</text>
<text x="1065.80" y="824.70" font-size="11" fill="#ff0000" font-family='"Liberation Serif", serif' textLength="51.50" lengthAdjust="spacingAndGlyphs" stroke="#ff0000" stroke-width="0.2">29901 (0)</text>
<text x="400.00" y="596.70" font-size="11" fill="#ff0000" font-family='"Liberation Serif", serif' text-anchor="middle" textLength="32.80" lengthAdjust="spacingAndGlyphs" stroke="#ff0000" stroke-width="0.2">32993</text>
<text x="400.00" y="609.20" font-size="11" fill="#ff0000" font-family='"Liberation Serif", serif' text-anchor="middle" textLength="14.50" lengthAdjust="spacingAndGlyphs" stroke="#ff0000" stroke-width="0.2">(0)</text>
<text x="1352.50" y="596.70" font-size="11" fill="#ff0000" font-family='"Liberation Serif", serif' text-anchor="middle" textLength="32.80" lengthAdjust="spacingAndGlyphs" stroke="#ff0000" stroke-width="0.2">32993</text>
<text x="1352.50" y="609.20" font-size="11" fill="#ff0000" font-family='"Liberation Serif", serif' text-anchor="middle" textLength="14.50" lengthAdjust="spacingAndGlyphs" stroke="#ff0000" stroke-width="0.2">(0)</text>
<text x="400.00" y="718.70" font-size="11" fill="#ff0000" font-family='"Liberation Serif", serif' text-anchor="middle" textLength="32.80" lengthAdjust="spacingAndGlyphs" stroke="#ff0000" stroke-width="0.2">32993</text>
<text x="400.00" y="731.20" font-size="11" fill="#ff0000" font-family='"Liberation Serif", serif' text-anchor="middle" textLength="14.50" lengthAdjust="spacingAndGlyphs" stroke="#ff0000" stroke-width="0.2">(0)</text>
<text x="876.00" y="718.70" font-size="11" fill="#ff0000" font-family='"Liberation Serif", serif' text-anchor="middle" textLength="32.80" lengthAdjust="spacingAndGlyphs" stroke="#ff0000" stroke-width="0.2">32993</text>
<text x="876.00" y="731.20" font-size="11" fill="#ff0000" font-family='"Liberation Serif", serif' text-anchor="middle" textLength="14.50" lengthAdjust="spacingAndGlyphs" stroke="#ff0000" stroke-width="0.2">(0)</text>
<text x="1352.50" y="718.70" font-size="11" fill="#ff0000" font-family='"Liberation Serif", serif' text-anchor="middle" textLength="32.80" lengthAdjust="spacingAndGlyphs" stroke="#ff0000" stroke-width="0.2">32993</text>
<text x="1352.50" y="731.20" font-size="11" fill="#ff0000" font-family='"Liberation Serif", serif' text-anchor="middle" textLength="14.50" lengthAdjust="spacingAndGlyphs" stroke="#ff0000" stroke-width="0.2">(0)</text>
<text x="400.00" y="840.70" font-size="11" fill="#ff0000" font-family='"Liberation Serif", serif' text-anchor="middle" textLength="32.80" lengthAdjust="spacingAndGlyphs" stroke="#ff0000" stroke-width="0.2">32993</text>
<text x="400.00" y="853.20" font-size="11" fill="#ff0000" font-family='"Liberation Serif", serif' text-anchor="middle" textLength="14.50" lengthAdjust="spacingAndGlyphs" stroke="#ff0000" stroke-width="0.2">(0)</text>
<text x="876.00" y="840.70" font-size="11" fill="#ff0000" font-family='"Liberation Serif", serif' text-anchor="middle" textLength="32.80" lengthAdjust="spacingAndGlyphs" stroke="#ff0000" stroke-width="0.2">32993</text>
<text x="876.00" y="853.20" font-size="11" fill="#ff0000" font-family='"Liberation Serif", serif' text-anchor="middle" textLength="14.50" lengthAdjust="spacingAndGlyphs" stroke="#ff0000" stroke-width="0.2">(0)</text>
<text x="1352.50" y="840.70" font-size="11" fill="#ff0000" font-family='"Liberation Serif", serif' text-anchor="middle" textLength="32.80" lengthAdjust="spacingAndGlyphs" stroke="#ff0000" stroke-width="0.2">32993</text>
<text x="1352.50" y="853.20" font-size="11" fill="#ff0000" font-family='"Liberation Serif", serif' text-anchor="middle" textLength="14.50" lengthAdjust="spacingAndGlyphs" stroke="#ff0000" stroke-width="0.2">(0)</text>
<path d="M381.50 429.30 L391.10 438.90 L381.50 448.50 L371.90 438.90 Z" fill="#ff0000"/>
<path d="M857.50 429.30 L867.10 438.90 L857.50 448.50 L847.90 438.90 Z" fill="#ff0000"/>
<path d="M1333.50 429.30 L1343.10 438.90 L1333.50 448.50 L1323.90 438.90 Z" fill="#ff0000"/>
<path d="M381.50 551.30 L391.10 560.90 L381.50 570.50 L371.90 560.90 Z" fill="#ff0000"/>
<path d="M857.50 551.30 L867.10 560.90 L857.50 570.50 L847.90 560.90 Z" fill="#ff0000"/>
<path d="M1333.50 551.30 L1343.10 560.90 L1333.50 570.50 L1323.90 560.90 Z" fill="#ff0000"/>
<path d="M381.50 673.30 L391.10 682.90 L381.50 692.50 L371.90 682.90 Z" fill="#ff0000"/>
<path d="M857.50 673.30 L867.10 682.90 L857.50 692.50 L847.90 682.90 Z" fill="#ff0000"/>
<path d="M1333.50 673.30 L1343.10 682.90 L1333.50 692.50 L1323.90 682.90 Z" fill="#ff0000"/>
<path d="M381.50 795.30 L391.10 804.90 L381.50 814.50 L371.90 804.90 Z" fill="#ff0000"/>
<path d="M857.50 795.30 L867.10 804.90 L857.50 814.50 L847.90 804.90 Z" fill="#00ff00"/>
<path d="M1333.50 795.30 L1343.10 804.90 L1333.50 814.50 L1323.90 804.90 Z" fill="#ff0000"/>
<rect x="6.80" y="924.90" width="98.70" height="17.20" rx="3.5" fill="#e9e9ed" stroke="#8f8f9d"/>
<text x="56.15" y="937.40" font-size="11" fill="#15141a" text-anchor="middle" textLength="91.20" lengthAdjust="spacingAndGlyphs" >Empty Log Window</text>
<rect x="110.80" y="924.90" width="130.50" height="17.20" rx="3.5" fill="#e9e9ed" stroke="#8f8f9d"/>
<text x="176.05" y="937.40" font-size="11" fill="#15141a" text-anchor="middle" textLength="123.30" lengthAdjust="spacingAndGlyphs" >Send Log Window to ELog</text>
<rect x="246.80" y="924.90" width="38.70" height="17.20" rx="3.5" fill="#e9e9ed" stroke="#8f8f9d"/>
<text x="266.15" y="937.40" font-size="11" fill="#15141a" text-anchor="middle" textLength="32.94" lengthAdjust="spacingAndGlyphs" >Reload</text>
<rect x="290.80" y="924.90" width="33.50" height="17.20" rx="3.5" fill="#e9e9ed" stroke="#8f8f9d"/>
<text x="307.55" y="937.40" font-size="11" fill="#15141a" text-anchor="middle" textLength="27.15" lengthAdjust="spacingAndGlyphs" >Reset</text>
<rect x="329.80" y="924.90" width="78.50" height="17.20" rx="3.5" fill="#e9e9ed" stroke="#8f8f9d"/>
<text x="369.05" y="937.40" font-size="11" fill="#15141a" text-anchor="middle" textLength="71.45" lengthAdjust="spacingAndGlyphs" >Show Variables</text>
<rect x="413.80" y="924.90" width="94.10" height="17.20" rx="3.5" fill="#e9e9ed" stroke="#8f8f9d"/>
<text x="460.85" y="937.40" font-size="11" fill="#15141a" text-anchor="middle" textLength="86.09" lengthAdjust="spacingAndGlyphs" >Show Log Window</text>
<rect x="513.80" y="924.90" width="77.50" height="17.20" rx="3.5" fill="#e9e9ed" stroke="#8f8f9d"/>
<text x="552.55" y="937.40" font-size="11" fill="#15141a" text-anchor="middle" textLength="72.25" lengthAdjust="spacingAndGlyphs" >Enable Logging</text>
<rect x="1806.80" y="924.90" width="106.50" height="17.20" rx="3.5" fill="#e9e9ed" stroke="#8f8f9d"/>
<text x="1860.05" y="937.40" font-size="11" fill="#15141a" text-anchor="middle" textLength="97.07" lengthAdjust="spacingAndGlyphs" >How to use this page</text>
<text x="115.80" y="946.70" font-size="11" fill="#ff0000" font-family='"Liberation Serif", serif' textLength="51.50" lengthAdjust="spacingAndGlyphs" stroke="#ff0000" stroke-width="0.2">29901 (0)</text>
<text x="400.00" y="962.50" font-size="11" fill="#ff0000" font-family='"Liberation Serif", serif' text-anchor="middle" textLength="32.80" lengthAdjust="spacingAndGlyphs" stroke="#ff0000" stroke-width="0.2">32993</text>
<text x="400.00" y="975.00" font-size="11" fill="#ff0000" font-family='"Liberation Serif", serif' text-anchor="middle" textLength="14.50" lengthAdjust="spacingAndGlyphs" stroke="#ff0000" stroke-width="0.2">(0)</text>
<text x="1087.50" y="946.70" font-size="11" fill="#ff0000" font-family='"Liberation Serif", serif' textLength="51.50" lengthAdjust="spacingAndGlyphs" stroke="#ff0000" stroke-width="0.2">29901 (0)</text>
<text x="1352.50" y="962.50" font-size="11" fill="#ff0000" font-family='"Liberation Serif", serif' text-anchor="middle" textLength="32.80" lengthAdjust="spacingAndGlyphs" stroke="#ff0000" stroke-width="0.2">32993</text>
<text x="1352.50" y="975.00" font-size="11" fill="#ff0000" font-family='"Liberation Serif", serif' text-anchor="middle" textLength="14.50" lengthAdjust="spacingAndGlyphs" stroke="#ff0000" stroke-width="0.2">(0)</text>
<text x="1643.00" y="968.00" font-size="15.6" fill="#ff0000" font-family='"Liberation Serif", serif' textLength="269.20" lengthAdjust="spacingAndGlyphs" >Last Updated: October 30, 2025 10:47:31</text>
<rect x="6" y="984" width="1908" height="1" fill="#46494e"/>
<rect x="6" y="985" width="1908" height="1" fill="#5c5f63"/>
<rect x="8" y="994" width="1.3" height="1.3" fill="#333"/>
<text x="8.30" y="1010.00" font-size="15.4" fill="#0000ee" font-family='"Liberation Serif", serif' textLength="38.40" lengthAdjust="spacingAndGlyphs" >Home</text>
<rect x="8.3" y="1011.3" width="38.4" height="1" fill="#0000ee"/>
</svg>
</body></html>
